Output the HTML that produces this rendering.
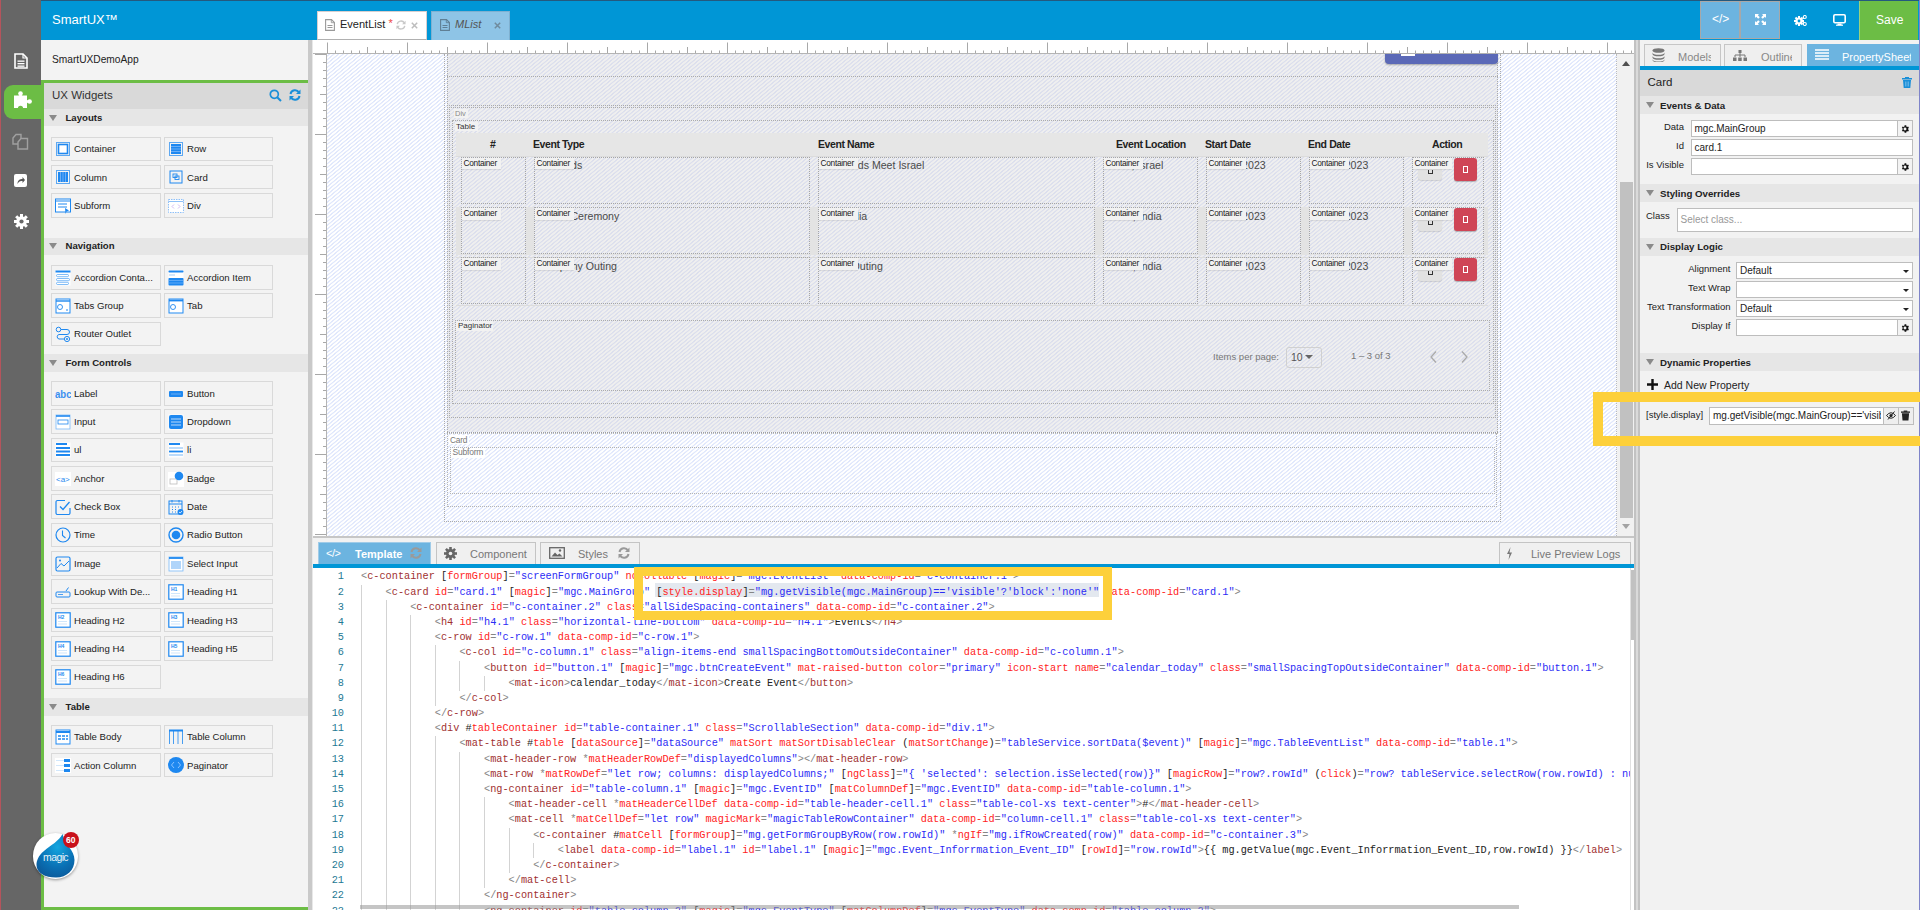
<!DOCTYPE html>
<html><head><meta charset="utf-8"><style>
*{box-sizing:border-box;margin:0;padding:0}
html,body{width:1920px;height:910px;overflow:hidden;background:#f2f2f2;font-family:"Liberation Sans",sans-serif;color:#222}
.a{position:absolute}
.t{white-space:nowrap;line-height:1}
.hatch{background-color:#f1f4fd;background-image:repeating-linear-gradient(-40deg,#ffffff 0px,#ffffff 1.2px,#e1e8fc 1.7px,#e1e8fc 2.5px,#ffffff 2.95px)}
.ghatch{background-color:#e7e9ee;background-image:repeating-linear-gradient(-40deg,#efefef 0px,#efefef 1.2px,#dcdfed 1.7px,#dcdfed 2.5px,#efefef 2.95px)}
.code{font-family:"Liberation Mono",monospace;font-size:10.25px;line-height:15.16px;white-space:pre}
.wi{background:#f3f3f3;border:1px solid #d9d9d9}
.wt{font-size:9.6px;color:#222}
.sh{background:#e6e6e6}
.st{font-size:9.6px;font-weight:bold;color:#222}
.tri{width:0;height:0;border-left:4.5px solid transparent;border-right:4.5px solid transparent;border-top:6px solid #8a8a8a}
.dot{border:1px dotted #9a9a9a}
.lbl{background:#f2f2f2;font-size:7.5px;color:#333;padding:1px 2px;line-height:1}
.tg{color:#a03030}.at{color:#f22}.sv{color:#2b2bf5}.dl{color:#858585}.pl{color:#222}
</style></head><body>
<div class="a " style="left:0px;top:0px;width:41px;height:910px;background:#666;border-left:1px solid #b5545c"></div>
<svg class="a" style="left:14px;top:53px" width="14" height="16" viewBox="0 0 14 16"><path d="M1 1H9L13 5V15H1Z" fill="none" stroke="#fff" stroke-width="1.6"/><path d="M9 1V5H13" fill="none" stroke="#fff" stroke-width="1.2"/><rect x="3.5" y="7.5" width="7" height="1.3" fill="#fff"/><rect x="3.5" y="10" width="7" height="1.3" fill="#fff"/><rect x="3.5" y="12.5" width="7" height="1.3" fill="#fff"/></svg>
<div class="a " style="left:4px;top:85px;width:40px;height:34px;background:#6cbd45;border-radius:9px 0 0 9px"></div>
<svg class="a" style="left:13px;top:91px" width="20" height="18" viewBox="0 0 20 18"><rect x="1" y="4.5" width="13" height="12.5" fill="#fff"/><rect x="6.2" y="2.5" width="2.6" height="3" fill="#fff"/><circle cx="7.5" cy="2.6" r="2.3" fill="#fff"/><rect x="13" y="9.2" width="3" height="2.6" fill="#fff"/><circle cx="16.6" cy="10.5" r="2.3" fill="#fff"/><circle cx="7.5" cy="17.3" r="2.6" fill="#6cbd45"/></svg>
<svg class="a" style="left:12px;top:133px" width="17" height="17" viewBox="0 0 17 17"><path d="M1 5L4 1.5H9V11H1Z" fill="none" stroke="#a0a0a0" stroke-width="1.4"/><path d="M6 9L9 5.5H15.5V16H6Z" fill="#666" stroke="#a0a0a0" stroke-width="1.4"/></svg>
<svg class="a" style="left:14px;top:174px" width="13" height="13" viewBox="0 0 13 13"><rect x="0" y="0" width="13" height="13" rx="2" fill="#fff"/><path d="M3.5 10C3.5 6 6 5 8.5 5V3L11 6L8.5 9V7C6.5 7 4.5 7.5 3.5 10Z" fill="#555"/></svg>
<svg class="a" style="left:13.5px;top:213.8px" width="15" height="15" viewBox="0 0 15 15"><rect x="6" y="0" width="3" height="15" fill="#fff" transform="rotate(0 7.5 7.5)"/><rect x="6" y="0" width="3" height="15" fill="#fff" transform="rotate(45 7.5 7.5)"/><rect x="6" y="0" width="3" height="15" fill="#fff" transform="rotate(90 7.5 7.5)"/><rect x="6" y="0" width="3" height="15" fill="#fff" transform="rotate(135 7.5 7.5)"/><circle cx="7.5" cy="7.5" r="5.3" fill="#fff"/><circle cx="7.5" cy="7.5" r="2.1" fill="#666"/></svg>
<div class="a " style="left:41px;top:0px;width:1879px;height:40px;background:#0096d6;border-top:1px solid #24597e"></div>
<div class="a t " style="left:52px;top:13px;font-size:13px;color:#fff">SmartUX&trade;</div>
<div class="a " style="left:317px;top:11px;width:110px;height:29px;background:#fff;border:1px solid #d8cfcf;border-bottom:1px solid #b0b0b0"></div>
<svg class="a" style="left:325px;top:19px" width="10" height="12" viewBox="0 0 10 12"><path d="M.6 .6H6.5L9.4 3.5V11.4H.6Z" fill="none" stroke="#999" stroke-width="1.1"/><path d="M6.3 .6V3.7H9.4" fill="none" stroke="#999" stroke-width=".9"/><path d="M2.5 6.5H7.5M2.5 8.5H7.5" stroke="#999" stroke-width="1"/></svg>
<div class="a t " style="left:340px;top:19px;font-size:11px;color:#222">EventList</div>
<div class="a t " style="left:388.5px;top:17.5px;font-size:11px;color:#e44">*</div>
<svg class="a" style="left:396px;top:20px" width="10" height="10" viewBox="0 0 12 12"><path d="M1.5 5A4.6 4.6 0 0 1 10 3.5" fill="none" stroke="#c8c8c8" stroke-width="1.6"/><path d="M11.5 .8V5H7.3Z" fill="#c8c8c8"/><path d="M10.5 7A4.6 4.6 0 0 1 2 8.5" fill="none" stroke="#c8c8c8" stroke-width="1.6"/><path d="M.5 11.2V7H4.7Z" fill="#c8c8c8"/></svg>
<svg class="a" style="left:410.5px;top:21.5px" width="7" height="7" viewBox="0 0 7 7"><path d="M.8 .8L6.2 6.2M6.2 .8L.8 6.2" stroke="#bdbdbd" stroke-width="1.5"/></svg>
<div class="a " style="left:431px;top:11px;width:79px;height:29px;background:#8ec4e6;border:1px solid #7fb0d0;border-bottom:none"></div>
<svg class="a" style="left:440px;top:19px" width="10" height="12" viewBox="0 0 10 12"><path d="M.6 .6H6.5L9.4 3.5V11.4H.6Z" fill="none" stroke="#5f7f95" stroke-width="1.1"/><path d="M6.3 .6V3.7H9.4" fill="none" stroke="#5f7f95" stroke-width=".9"/><path d="M2.5 6.5H7.5M2.5 8.5H7.5" stroke="#5f7f95" stroke-width="1"/></svg>
<div class="a t " style="left:455px;top:19px;font-size:11px;color:#555;font-style:italic">MList</div>
<svg class="a" style="left:494px;top:21.5px" width="7" height="7" viewBox="0 0 7 7"><path d="M.8 .8L6.2 6.2M6.2 .8L.8 6.2" stroke="#6f8a9c" stroke-width="1.5"/></svg>
<div class="a " style="left:1700px;top:1px;width:40px;height:38px;background:#6cb4e0;border:1px solid #a8a8a8"></div>
<div class="a t " style="left:1712px;top:13px;font-size:12px;color:#fff">&lt;/&gt;</div>
<div class="a " style="left:1740px;top:1px;width:40px;height:38px;background:#6cb4e0;border:1px solid #a8a8a8"></div>
<svg class="a" style="left:1755px;top:14px" width="11" height="11" viewBox="0 0 11 11"><path d="M0 0H4L2.8 1.2 4.8 3.2 3.2 4.8 1.2 2.8 0 4ZM11 0V4L9.8 2.8 7.8 4.8 6.2 3.2 8.2 1.2 7 0ZM0 11V7L1.2 8.2 3.2 6.2 4.8 7.8 2.8 9.8 4 11ZM11 11H7L8.2 9.8 6.2 7.8 7.8 6.2 9.8 8.2 11 7Z" fill="#fff"/></svg>
<svg class="a" style="left:1793.5px;top:14.5px" width="13" height="11" viewBox="0 0 13 11"><g transform="translate(0,1)"><rect x="4" y="0" width="2" height="10" fill="#fff" transform="rotate(0 5 5)"/><rect x="4" y="0" width="2" height="10" fill="#fff" transform="rotate(45 5 5)"/><rect x="4" y="0" width="2" height="10" fill="#fff" transform="rotate(90 5 5)"/><rect x="4" y="0" width="2" height="10" fill="#fff" transform="rotate(135 5 5)"/><circle cx="5" cy="5" r="3.6" fill="#fff"/><circle cx="5" cy="5" r="1.4" fill="#0096d6"/></g><circle cx="10.8" cy="2" r="1.5" fill="none" stroke="#fff" stroke-width="1.1"/><circle cx="10.8" cy="9" r="1.5" fill="none" stroke="#fff" stroke-width="1.1"/><path d="M8.5 4.5L9.8 3M8.5 6.5L9.8 8" stroke="#fff" stroke-width="1"/></svg>
<svg class="a" style="left:1833px;top:14px" width="13" height="12" viewBox="0 0 13 12"><rect x=".8" y=".8" width="11.4" height="8" rx="1.2" fill="none" stroke="#fff" stroke-width="1.6"/><rect x="4.5" y="9.5" width="4" height="1.5" fill="#fff"/><rect x="3" y="10.6" width="7" height="1.2" fill="#fff"/></svg>
<div class="a " style="left:1859px;top:1px;width:59px;height:39px;background:#6cbd45;border-left:1px solid #9ad27e"></div>
<div class="a t " style="left:1876px;top:14px;font-size:12px;color:#fff">Save</div>
<div class="a " style="left:41px;top:40px;width:267px;height:870px;background:#f3f3f3"></div>
<div class="a t " style="left:52px;top:55px;font-size:10.2px;color:#222">SmartUXDemoApp</div>
<div class="a " style="left:41px;top:80px;width:267px;height:3px;background:#6cbd45"></div>
<div class="a " style="left:41px;top:80px;width:3px;height:830px;background:#6cbd45"></div>
<div class="a " style="left:41px;top:907px;width:267px;height:3px;background:#6cbd45"></div>
<div class="a " style="left:44px;top:83px;width:264px;height:26px;background:#d9d9d9"></div>
<div class="a t " style="left:52px;top:90px;font-size:11.5px;color:#333">UX Widgets</div>
<svg class="a" style="left:269px;top:89px" width="13" height="13" viewBox="0 0 13 13"><circle cx="5.3" cy="5.3" r="4" fill="none" stroke="#1a8fd8" stroke-width="1.7"/><path d="M8.2 8.2L12 12" stroke="#1a8fd8" stroke-width="2"/></svg>
<svg class="a" style="left:289px;top:89px" width="12" height="12" viewBox="0 0 12 12"><path d="M1.5 5A4.6 4.6 0 0 1 10 3.5" fill="none" stroke="#1a8fd8" stroke-width="2"/><path d="M11.5 .5V5H7Z" fill="#1a8fd8"/><path d="M10.5 7A4.6 4.6 0 0 1 2 8.5" fill="none" stroke="#1a8fd8" stroke-width="2"/><path d="M.5 11.5V7H5Z" fill="#1a8fd8"/></svg>
<div class="a " style="left:308px;top:40px;width:5px;height:870px;background:#c9c9c9;border-right:1px solid #e8e8e8"></div>
<div class="a sh" style="left:44px;top:109px;width:264px;height:17px;"></div>
<div class="a tri" style="left:48.8px;top:114.8px"></div>
<div class="a t st" style="left:65.5px;top:112.6px;">Layouts</div>
<div class="a wi" style="left:51px;top:136.5px;width:110px;height:24.5px;"></div>
<svg class="a" style="left:54.5px;top:141.0px" width="16" height="16" viewBox="0 0 16 16"><rect x="1.5" y="1.5" width="13" height="13" fill="none" stroke="#1e88f0" stroke-width="1" opacity=".7"/><rect x="3.5" y="3.5" width="9" height="9" fill="#fff" stroke="#1e88f0" stroke-width="1.6"/></svg>
<div class="a t wt" style="left:74px;top:144.2px;">Container</div>
<div class="a wi" style="left:164px;top:136.5px;width:109px;height:24.5px;"></div>
<svg class="a" style="left:167.5px;top:141.0px" width="16" height="16" viewBox="0 0 16 16"><rect x="1.5" y="1.5" width="13" height="13" fill="none" stroke="#1e88f0" stroke-width="1" opacity=".7"/><rect x="3" y="3" width="10" height="10" fill="#1e88f0"/><path d="M3 5.5H13M3 8H13M3 10.5H13" stroke="#7fb8f8" stroke-width=".8"/></svg>
<div class="a t wt" style="left:187px;top:144.2px;">Row</div>
<div class="a wi" style="left:51px;top:164.85px;width:110px;height:24.5px;"></div>
<svg class="a" style="left:54.5px;top:169.35px" width="16" height="16" viewBox="0 0 16 16"><rect x="1.5" y="1.5" width="13" height="13" fill="none" stroke="#1e88f0" stroke-width="1" opacity=".7"/><rect x="3" y="3" width="10" height="10" fill="#1e88f0"/><path d="M5.5 3V13M8 3V13M10.5 3V13" stroke="#7fb8f8" stroke-width=".8"/></svg>
<div class="a t wt" style="left:74px;top:172.54999999999998px;">Column</div>
<div class="a wi" style="left:164px;top:164.85px;width:109px;height:24.5px;"></div>
<svg class="a" style="left:167.5px;top:169.35px" width="16" height="16" viewBox="0 0 16 16"><rect x="2" y="2" width="12" height="12" fill="none" stroke="#1e88f0" stroke-width="1"/><rect x="5" y="5" width="4" height="3.5" fill="none" stroke="#1e88f0" stroke-width=".9"/><rect x="7" y="7" width="4" height="3.5" fill="none" stroke="#1e88f0" stroke-width=".9"/></svg>
<div class="a t wt" style="left:187px;top:172.54999999999998px;">Card</div>
<div class="a wi" style="left:51px;top:193.2px;width:110px;height:24.5px;"></div>
<svg class="a" style="left:54.5px;top:197.7px" width="16" height="16" viewBox="0 0 16 16"><rect x=".5" y="1" width="15" height="13" fill="#fff" stroke="#1e88f0" stroke-width="1"/><path d="M.5 3H15.5M3 6H12M3 9H12" stroke="#1e88f0" stroke-width="1"/><path d="M10 10L14 12.5L11.5 13.5L10.5 16Z" fill="#1e88f0"/></svg>
<div class="a t wt" style="left:74px;top:200.89999999999998px;">Subform</div>
<div class="a wi" style="left:164px;top:193.2px;width:109px;height:24.5px;"></div>
<svg class="a" style="left:167.5px;top:197.7px" width="16" height="16" viewBox="0 0 16 16"><rect x=".5" y="1.5" width="15" height="13" fill="#fff" stroke="#8ec0f8" stroke-width="1" stroke-dasharray="1.5 1"/><path d="M.5 3.5H15.5" stroke="#8ec0f8"/><path d="M6 6.5L4 8.5L6 10.5M10 6.5L12 8.5L10 10.5" fill="none" stroke="#c8a8f0" stroke-width=".8"/></svg>
<div class="a t wt" style="left:187px;top:200.89999999999998px;">Div</div>
<div class="a sh" style="left:44px;top:237.5px;width:264px;height:17.5px;"></div>
<div class="a tri" style="left:48.8px;top:243.3px"></div>
<div class="a t st" style="left:65.5px;top:241.1px;">Navigation</div>
<div class="a wi" style="left:51px;top:265.0px;width:110px;height:24.5px;"></div>
<svg class="a" style="left:54.5px;top:269.5px" width="16" height="16" viewBox="0 0 16 16"><rect x=".5" y=".5" width="15" height="15" fill="#fff" stroke="none"/><path d="M.5 1.5H15.5" stroke="#1e88f0" stroke-width="2"/><rect x="1.5" y="4.5" width="12" height="2.2" rx="1" fill="none" stroke="#1e88f0" stroke-width=".8" opacity=".7"/><rect x="1.5" y="8.5" width="13" height="2.2" rx="1" fill="none" stroke="#1e88f0" stroke-width=".8" opacity=".7"/><rect x="1.5" y="12.3" width="12" height="2.2" rx="1" fill="none" stroke="#1e88f0" stroke-width=".8" opacity=".7"/></svg>
<div class="a t wt" style="left:74px;top:272.7px;">Accordion Conta...</div>
<div class="a wi" style="left:164px;top:265.0px;width:109px;height:24.5px;"></div>
<svg class="a" style="left:167.5px;top:269.5px" width="16" height="16" viewBox="0 0 16 16"><rect x=".5" y=".5" width="15" height="15" fill="#fff" stroke="none"/><rect x=".5" y=".5" width="15" height="2" rx=".8" fill="#1e88f0"/><rect x="1" y="4" width="6" height="2" fill="#1e88f0" opacity=".2"/><rect x=".5" y="8" width="15" height="7.5" rx=".8" fill="#1e88f0"/><path d="M1 10.5H15M1 13H15" stroke="#9ccaff" stroke-width=".5"/></svg>
<div class="a t wt" style="left:187px;top:272.7px;">Accordion Item</div>
<div class="a wi" style="left:51px;top:293.35px;width:110px;height:24.5px;"></div>
<svg class="a" style="left:54.5px;top:297.85px" width="16" height="16" viewBox="0 0 16 16"><rect x=".5" y=".5" width="15" height="15" fill="#fff" stroke="none"/><rect x="1" y="1" width="14" height="14" fill="none" stroke="#1e88f0" stroke-width="1"/><path d="M1 3H15" stroke="#1e88f0" stroke-width="1.4"/><circle cx="5" cy="9" r="2.5" fill="none" stroke="#1e88f0" stroke-width=".9"/><path d="M11 12H13" stroke="#1e88f0"/></svg>
<div class="a t wt" style="left:74px;top:301.05px;">Tabs Group</div>
<div class="a wi" style="left:164px;top:293.35px;width:109px;height:24.5px;"></div>
<svg class="a" style="left:167.5px;top:297.85px" width="16" height="16" viewBox="0 0 16 16"><rect x=".5" y=".5" width="15" height="15" fill="#fff" stroke="none"/><rect x="1" y="1" width="14" height="14" fill="none" stroke="#1e88f0" stroke-width="1"/><path d="M1 2.5H15" stroke="#1e88f0" stroke-width="1.8"/><circle cx="5" cy="9" r="2.5" fill="none" stroke="#1e88f0" stroke-width=".9"/></svg>
<div class="a t wt" style="left:187px;top:301.05px;">Tab</div>
<div class="a wi" style="left:51px;top:321.7px;width:110px;height:24.5px;"></div>
<svg class="a" style="left:54.5px;top:326.2px" width="16" height="16" viewBox="0 0 16 16"><circle cx="3.5" cy="3.5" r="2.3" fill="none" stroke="#1e88f0" stroke-width="1"/><circle cx="12" cy="13" r="2.6" fill="none" stroke="#1e88f0" stroke-width="1"/><circle cx="12" cy="13" r="1" fill="#1e88f0"/><path d="M6 3.5H12A2.5 2.5 0 0 1 12 8.5H4A2.3 2.3 0 0 0 4 13H9" fill="none" stroke="#1e88f0" stroke-width="1"/></svg>
<div class="a t wt" style="left:74px;top:329.4px;">Router Outlet</div>
<div class="a sh" style="left:44px;top:354px;width:264px;height:18px;"></div>
<div class="a tri" style="left:48.8px;top:359.8px"></div>
<div class="a t st" style="left:65.5px;top:357.6px;">Form Controls</div>
<div class="a wi" style="left:51px;top:381.0px;width:110px;height:24.5px;"></div>
<svg class="a" style="left:54.5px;top:385.5px" width="16" height="16" viewBox="0 0 16 16"><text x="0" y="12.3" font-family="Liberation Sans" font-weight="bold" font-size="10" textLength="16.5" lengthAdjust="spacingAndGlyphs" fill="#3a8ff0">abc</text></svg>
<div class="a t wt" style="left:74px;top:388.7px;">Label</div>
<div class="a wi" style="left:164px;top:381.0px;width:109px;height:24.5px;"></div>
<svg class="a" style="left:167.5px;top:385.5px" width="16" height="16" viewBox="0 0 16 16"><rect x="1" y="5" width="14" height="6" rx="1" fill="#1e88f0"/><path d="M3 8H13" stroke="#9cc8f8" stroke-width=".6"/></svg>
<div class="a t wt" style="left:187px;top:388.7px;">Button</div>
<div class="a wi" style="left:51px;top:409.35px;width:110px;height:24.5px;"></div>
<svg class="a" style="left:54.5px;top:413.85px" width="16" height="16" viewBox="0 0 16 16"><rect x=".5" y=".5" width="15" height="15" fill="#fff" stroke="none"/><rect x="1" y="1" width="14" height="14" fill="none" stroke="#1e88f0" stroke-width=".8" opacity=".6"/><path d="M1 2H15" stroke="#1e88f0" stroke-width="1.6"/><rect x="3" y="6" width="10" height="4" fill="none" stroke="#1e88f0" stroke-width=".8"/></svg>
<div class="a t wt" style="left:74px;top:417.05px;">Input</div>
<div class="a wi" style="left:164px;top:409.35px;width:109px;height:24.5px;"></div>
<svg class="a" style="left:167.5px;top:413.85px" width="16" height="16" viewBox="0 0 16 16"><rect x=".5" y=".5" width="15" height="15" fill="#fff" stroke="none"/><rect x="1" y="1" width="14" height="14" rx="2" fill="#1e88f0"/><path d="M3 5H13M3 8H13M3 11H13" stroke="#fff" stroke-width=".7"/></svg>
<div class="a t wt" style="left:187px;top:417.05px;">Dropdown</div>
<div class="a wi" style="left:51px;top:437.7px;width:110px;height:24.5px;"></div>
<svg class="a" style="left:54.5px;top:442.2px" width="16" height="16" viewBox="0 0 16 16"><rect x=".5" y=".5" width="15" height="15" fill="#fff" stroke="none"/><rect x="1" y="1" width="11" height="2" fill="#1e88f0"/><path d="M1 6H15M1 9.5H15M1 13H15" stroke="#1e88f0" stroke-width="1.8"/></svg>
<div class="a t wt" style="left:74px;top:445.4px;">ul</div>
<div class="a wi" style="left:164px;top:437.7px;width:109px;height:24.5px;"></div>
<svg class="a" style="left:167.5px;top:442.2px" width="16" height="16" viewBox="0 0 16 16"><rect x=".5" y=".5" width="15" height="15" fill="#fff" stroke="none"/><rect x="1" y="1" width="11" height="2" fill="#1e88f0"/><path d="M1 6H15M1 13H15" stroke="#1e88f0" stroke-width="1" opacity=".6"/><path d="M1 9.5H15" stroke="#1e88f0" stroke-width="1.8"/></svg>
<div class="a t wt" style="left:187px;top:445.4px;">li</div>
<div class="a wi" style="left:51px;top:466.05px;width:110px;height:24.5px;"></div>
<svg class="a" style="left:54.5px;top:470.55px" width="16" height="16" viewBox="0 0 16 16"><rect x="0" y="1" width="16" height="14" fill="#fff"/><text x="1" y="11" font-family="Liberation Sans" font-size="8" fill="#1e88f0">&lt;a&gt;</text></svg>
<div class="a t wt" style="left:74px;top:473.75px;">Anchor</div>
<div class="a wi" style="left:164px;top:466.05px;width:109px;height:24.5px;"></div>
<svg class="a" style="left:167.5px;top:470.55px" width="16" height="16" viewBox="0 0 16 16"><rect x="0" y="1" width="16" height="15" fill="#fff"/><rect x="2" y="8" width="7" height="5" fill="none" stroke="#bbb" stroke-width=".8"/><circle cx="11" cy="5" r="4.3" fill="#1e88f0"/></svg>
<div class="a t wt" style="left:187px;top:473.75px;">Badge</div>
<div class="a wi" style="left:51px;top:494.4px;width:110px;height:24.5px;"></div>
<svg class="a" style="left:54.5px;top:498.9px" width="16" height="16" viewBox="0 0 16 16"><path d="M10 1.5H2.5A1.5 1.5 0 0 0 1 3V14A1.5 1.5 0 0 0 2.5 15.5H13.5A1.5 1.5 0 0 0 15 14V9" fill="none" stroke="#1e88f0" stroke-width="1.2"/><path d="M5 7.5L8 10.5L14.5 3" fill="none" stroke="#1e88f0" stroke-width="1.3"/></svg>
<div class="a t wt" style="left:74px;top:502.09999999999997px;">Check Box</div>
<div class="a wi" style="left:164px;top:494.4px;width:109px;height:24.5px;"></div>
<svg class="a" style="left:167.5px;top:498.9px" width="16" height="16" viewBox="0 0 16 16"><rect x="1" y="2" width="13" height="13" fill="none" stroke="#1e88f0" stroke-width="1"/><path d="M4 1V3.5M11 1V3.5M1 5H14M4 8H5M7 8H8M10 8H11M4 10.5H5M7 10.5H8M4 13H5M7 13H8" stroke="#1e88f0" stroke-width="1"/><circle cx="12.5" cy="13" r="3" fill="#1e88f0"/><path d="M11 13L12.2 14L14 12" fill="none" stroke="#fff" stroke-width=".8"/></svg>
<div class="a t wt" style="left:187px;top:502.09999999999997px;">Date</div>
<div class="a wi" style="left:51px;top:522.75px;width:110px;height:24.5px;"></div>
<svg class="a" style="left:54.5px;top:527.25px" width="16" height="16" viewBox="0 0 16 16"><circle cx="8" cy="8" r="7" fill="none" stroke="#1e88f0" stroke-width="1.2"/><path d="M7.5 3.5V8.5L10.5 11" fill="none" stroke="#1e88f0" stroke-width="1.1"/></svg>
<div class="a t wt" style="left:74px;top:530.45px;">Time</div>
<div class="a wi" style="left:164px;top:522.75px;width:109px;height:24.5px;"></div>
<svg class="a" style="left:167.5px;top:527.25px" width="16" height="16" viewBox="0 0 16 16"><circle cx="8" cy="8" r="7" fill="none" stroke="#1e88f0" stroke-width="1.4"/><circle cx="8" cy="8" r="4.3" fill="#1e88f0"/></svg>
<div class="a t wt" style="left:187px;top:530.45px;">Radio Button</div>
<div class="a wi" style="left:51px;top:551.1px;width:110px;height:24.5px;"></div>
<svg class="a" style="left:54.5px;top:555.6px" width="16" height="16" viewBox="0 0 16 16"><rect x="1" y="1" width="14" height="14" rx="1.5" fill="none" stroke="#1e88f0" stroke-width="1.2"/><path d="M2 12L6 7.5L9 10L14 5" fill="none" stroke="#1e88f0" stroke-width="1"/><circle cx="5" cy="4.5" r="1" fill="#1e88f0"/></svg>
<div class="a t wt" style="left:74px;top:558.8000000000001px;">Image</div>
<div class="a wi" style="left:164px;top:551.1px;width:109px;height:24.5px;"></div>
<svg class="a" style="left:167.5px;top:555.6px" width="16" height="16" viewBox="0 0 16 16"><rect x=".5" y=".5" width="15" height="15" fill="#fff" stroke="none"/><rect x="1" y="1" width="14" height="14" fill="none" stroke="#1e88f0" stroke-width=".8" opacity=".6"/><path d="M1 2H15" stroke="#1e88f0" stroke-width="1.8"/><rect x="3" y="5" width="10" height="8" fill="#1e88f0" opacity=".35"/></svg>
<div class="a t wt" style="left:187px;top:558.8000000000001px;">Select Input</div>
<div class="a wi" style="left:51px;top:579.45px;width:110px;height:24.5px;"></div>
<svg class="a" style="left:54.5px;top:583.95px" width="16" height="16" viewBox="0 0 16 16"><rect x="1" y="8" width="14" height="5" rx="1" fill="none" stroke="#1e88f0" stroke-width="1"/><path d="M3 10.5H8" stroke="#1e88f0" stroke-width=".8"/><path d="M11 7L13.5 3.5" stroke="#1e88f0" stroke-width="1"/></svg>
<div class="a t wt" style="left:74px;top:587.1500000000001px;">Lookup With De...</div>
<div class="a wi" style="left:164px;top:579.45px;width:109px;height:24.5px;"></div>
<svg class="a" style="left:167.5px;top:583.95px" width="16" height="16" viewBox="0 0 16 16"><rect x=".8" y=".8" width="14.4" height="14.4" fill="#fff" stroke="#1e88f0" stroke-width="1.2"/><text x="3" y="7" font-family="Liberation Sans" font-size="5" font-weight="bold" fill="#1e88f0">H1</text><path d="M3 9.5H12M3 12H12" stroke="#1e88f0" stroke-width=".6" opacity=".35"/></svg>
<div class="a t wt" style="left:187px;top:587.1500000000001px;">Heading H1</div>
<div class="a wi" style="left:51px;top:607.8px;width:110px;height:24.5px;"></div>
<svg class="a" style="left:54.5px;top:612.3px" width="16" height="16" viewBox="0 0 16 16"><rect x=".8" y=".8" width="14.4" height="14.4" fill="#fff" stroke="#1e88f0" stroke-width="1.2"/><text x="3" y="7" font-family="Liberation Sans" font-size="5" font-weight="bold" fill="#1e88f0">H2</text><path d="M3 9.5H12M3 12H12" stroke="#1e88f0" stroke-width=".6" opacity=".35"/></svg>
<div class="a t wt" style="left:74px;top:615.5px;">Heading H2</div>
<div class="a wi" style="left:164px;top:607.8px;width:109px;height:24.5px;"></div>
<svg class="a" style="left:167.5px;top:612.3px" width="16" height="16" viewBox="0 0 16 16"><rect x=".8" y=".8" width="14.4" height="14.4" fill="#fff" stroke="#1e88f0" stroke-width="1.2"/><text x="3" y="7" font-family="Liberation Sans" font-size="5" font-weight="bold" fill="#1e88f0">H3</text><path d="M3 9.5H12M3 12H12" stroke="#1e88f0" stroke-width=".6" opacity=".35"/></svg>
<div class="a t wt" style="left:187px;top:615.5px;">Heading H3</div>
<div class="a wi" style="left:51px;top:636.15px;width:110px;height:24.5px;"></div>
<svg class="a" style="left:54.5px;top:640.65px" width="16" height="16" viewBox="0 0 16 16"><rect x=".8" y=".8" width="14.4" height="14.4" fill="#fff" stroke="#1e88f0" stroke-width="1.2"/><text x="3" y="7" font-family="Liberation Sans" font-size="5" font-weight="bold" fill="#1e88f0">H4</text><path d="M3 9.5H12M3 12H12" stroke="#1e88f0" stroke-width=".6" opacity=".35"/></svg>
<div class="a t wt" style="left:74px;top:643.85px;">Heading H4</div>
<div class="a wi" style="left:164px;top:636.15px;width:109px;height:24.5px;"></div>
<svg class="a" style="left:167.5px;top:640.65px" width="16" height="16" viewBox="0 0 16 16"><rect x=".8" y=".8" width="14.4" height="14.4" fill="#fff" stroke="#1e88f0" stroke-width="1.2"/><text x="3" y="7" font-family="Liberation Sans" font-size="5" font-weight="bold" fill="#1e88f0">H5</text><path d="M3 9.5H12M3 12H12" stroke="#1e88f0" stroke-width=".6" opacity=".35"/></svg>
<div class="a t wt" style="left:187px;top:643.85px;">Heading H5</div>
<div class="a wi" style="left:51px;top:664.5px;width:110px;height:24.5px;"></div>
<svg class="a" style="left:54.5px;top:669.0px" width="16" height="16" viewBox="0 0 16 16"><rect x=".8" y=".8" width="14.4" height="14.4" fill="#fff" stroke="#1e88f0" stroke-width="1.2"/><text x="3" y="7" font-family="Liberation Sans" font-size="5" font-weight="bold" fill="#1e88f0">H6</text><path d="M3 9.5H12M3 12H12" stroke="#1e88f0" stroke-width=".6" opacity=".35"/></svg>
<div class="a t wt" style="left:74px;top:672.2px;">Heading H6</div>
<div class="a sh" style="left:44px;top:698px;width:264px;height:17.5px;"></div>
<div class="a tri" style="left:48.8px;top:703.8px"></div>
<div class="a t st" style="left:65.5px;top:701.6px;">Table</div>
<div class="a wi" style="left:51px;top:724.5px;width:110px;height:24.5px;"></div>
<svg class="a" style="left:54.5px;top:729.0px" width="16" height="16" viewBox="0 0 16 16"><rect x=".5" y=".5" width="15" height="15" fill="#fff" stroke="none"/><rect x="1" y="1" width="14" height="14" fill="none" stroke="#1e88f0" stroke-width="1"/><path d="M1 3H15" stroke="#1e88f0" stroke-width="2"/><path d="M3 7H13M3 10H13" stroke="#1e88f0" stroke-width="1.4" stroke-dasharray="3 1"/></svg>
<div class="a t wt" style="left:74px;top:732.2px;">Table Body</div>
<div class="a wi" style="left:164px;top:724.5px;width:109px;height:24.5px;"></div>
<svg class="a" style="left:167.5px;top:729.0px" width="16" height="16" viewBox="0 0 16 16"><path d="M1 1.5H15" stroke="#1e88f0" stroke-width="2"/><path d="M1.5 2V15M5.5 2V15M10 2V15M14.5 2V15" stroke="#1e88f0" stroke-width="1" opacity=".8"/></svg>
<div class="a t wt" style="left:187px;top:732.2px;">Table Column</div>
<div class="a wi" style="left:51px;top:752.85px;width:110px;height:24.5px;"></div>
<svg class="a" style="left:54.5px;top:757.35px" width="16" height="16" viewBox="0 0 16 16"><rect x="0" y="1" width="16" height="15" fill="#fff"/><rect x="9" y="2" width="6" height="3" fill="#1e88f0"/><rect x="9" y="7" width="6" height="3" fill="#1e88f0"/><rect x="9" y="12" width="6" height="3" fill="#1e88f0"/><path d="M1 3.5H9M1 8.5H9M1 13.5H9" stroke="#1e88f0" stroke-width=".5" opacity=".4"/></svg>
<div class="a t wt" style="left:74px;top:760.5500000000001px;">Action Column</div>
<div class="a wi" style="left:164px;top:752.85px;width:109px;height:24.5px;"></div>
<svg class="a" style="left:167.5px;top:757.35px" width="16" height="16" viewBox="0 0 16 16"><circle cx="8" cy="8" r="8" fill="#1e88f0"/><path d="M6 5L3.5 8L6 11M10 5L12.5 8L10 11" fill="none" stroke="#8cc4ff" stroke-width="1"/></svg>
<div class="a t wt" style="left:187px;top:760.5500000000001px;">Paginator</div>
<div class="a" style="left:32.6px;top:833.2px;width:45.5px;height:45.5px;border-radius:50%;background:#fff;box-shadow:0 1px 3px rgba(0,0,0,.4)"></div>
<svg class="a" style="left:32.6px;top:833.2px" width="46" height="46" viewBox="0 0 46 46"><defs><radialGradient id="mg" cx="0.55" cy="0.3" r="0.8"><stop offset="0" stop-color="#13a6e0"/><stop offset="0.6" stop-color="#0a6fb3"/><stop offset="1" stop-color="#0b5595"/></radialGradient></defs><path d="M29.5 1C26 8 18 12 11 18C5 23 3.5 28 3.5 32C3.5 40 12 44.5 23 44.5C34 44.5 41.5 37 41.5 27C41.5 17 32 12 29.5 1Z" fill="url(#mg)"/><text x="10" y="27.5" font-family="Liberation Sans" font-size="10.5" letter-spacing="-0.6" fill="#fff" fill-opacity=".92">magic</text></svg>
<div class="a" style="left:62.8px;top:832.3px;width:16px;height:16px;border-radius:50%;background:#c8101a;color:#fff;font-size:8.5px;font-weight:bold;text-align:center;line-height:16px">60</div>
<div class="a " style="left:313px;top:40px;width:1322px;height:498px;background:#fff"></div>
<svg class="a" style="left:313px;top:40px" width="1322" height="14"><rect x="14" y="2.5" width="1" height="11.5" fill="#a8a8a8"/><rect x="22" y="10.5" width="1" height="3.5" fill="#a8a8a8"/><rect x="30" y="10.5" width="1" height="3.5" fill="#a8a8a8"/><rect x="38" y="10.5" width="1" height="3.5" fill="#a8a8a8"/><rect x="46" y="10.5" width="1" height="3.5" fill="#a8a8a8"/><rect x="54" y="7" width="1" height="7" fill="#a8a8a8"/><rect x="62" y="10.5" width="1" height="3.5" fill="#a8a8a8"/><rect x="70" y="10.5" width="1" height="3.5" fill="#a8a8a8"/><rect x="78" y="10.5" width="1" height="3.5" fill="#a8a8a8"/><rect x="86" y="10.5" width="1" height="3.5" fill="#a8a8a8"/><rect x="94" y="2.5" width="1" height="11.5" fill="#a8a8a8"/><rect x="102" y="10.5" width="1" height="3.5" fill="#a8a8a8"/><rect x="110" y="10.5" width="1" height="3.5" fill="#a8a8a8"/><rect x="118" y="10.5" width="1" height="3.5" fill="#a8a8a8"/><rect x="126" y="10.5" width="1" height="3.5" fill="#a8a8a8"/><rect x="134" y="7" width="1" height="7" fill="#a8a8a8"/><rect x="142" y="10.5" width="1" height="3.5" fill="#a8a8a8"/><rect x="150" y="10.5" width="1" height="3.5" fill="#a8a8a8"/><rect x="158" y="10.5" width="1" height="3.5" fill="#a8a8a8"/><rect x="166" y="10.5" width="1" height="3.5" fill="#a8a8a8"/><rect x="174" y="2.5" width="1" height="11.5" fill="#a8a8a8"/><rect x="182" y="10.5" width="1" height="3.5" fill="#a8a8a8"/><rect x="190" y="10.5" width="1" height="3.5" fill="#a8a8a8"/><rect x="198" y="10.5" width="1" height="3.5" fill="#a8a8a8"/><rect x="206" y="10.5" width="1" height="3.5" fill="#a8a8a8"/><rect x="214" y="7" width="1" height="7" fill="#a8a8a8"/><rect x="222" y="10.5" width="1" height="3.5" fill="#a8a8a8"/><rect x="230" y="10.5" width="1" height="3.5" fill="#a8a8a8"/><rect x="238" y="10.5" width="1" height="3.5" fill="#a8a8a8"/><rect x="246" y="10.5" width="1" height="3.5" fill="#a8a8a8"/><rect x="254" y="2.5" width="1" height="11.5" fill="#a8a8a8"/><rect x="262" y="10.5" width="1" height="3.5" fill="#a8a8a8"/><rect x="270" y="10.5" width="1" height="3.5" fill="#a8a8a8"/><rect x="278" y="10.5" width="1" height="3.5" fill="#a8a8a8"/><rect x="286" y="10.5" width="1" height="3.5" fill="#a8a8a8"/><rect x="294" y="7" width="1" height="7" fill="#a8a8a8"/><rect x="302" y="10.5" width="1" height="3.5" fill="#a8a8a8"/><rect x="310" y="10.5" width="1" height="3.5" fill="#a8a8a8"/><rect x="318" y="10.5" width="1" height="3.5" fill="#a8a8a8"/><rect x="326" y="10.5" width="1" height="3.5" fill="#a8a8a8"/><rect x="334" y="2.5" width="1" height="11.5" fill="#a8a8a8"/><rect x="342" y="10.5" width="1" height="3.5" fill="#a8a8a8"/><rect x="350" y="10.5" width="1" height="3.5" fill="#a8a8a8"/><rect x="358" y="10.5" width="1" height="3.5" fill="#a8a8a8"/><rect x="366" y="10.5" width="1" height="3.5" fill="#a8a8a8"/><rect x="374" y="7" width="1" height="7" fill="#a8a8a8"/><rect x="382" y="10.5" width="1" height="3.5" fill="#a8a8a8"/><rect x="390" y="10.5" width="1" height="3.5" fill="#a8a8a8"/><rect x="398" y="10.5" width="1" height="3.5" fill="#a8a8a8"/><rect x="406" y="10.5" width="1" height="3.5" fill="#a8a8a8"/><rect x="414" y="2.5" width="1" height="11.5" fill="#a8a8a8"/><rect x="422" y="10.5" width="1" height="3.5" fill="#a8a8a8"/><rect x="430" y="10.5" width="1" height="3.5" fill="#a8a8a8"/><rect x="438" y="10.5" width="1" height="3.5" fill="#a8a8a8"/><rect x="446" y="10.5" width="1" height="3.5" fill="#a8a8a8"/><rect x="454" y="7" width="1" height="7" fill="#a8a8a8"/><rect x="462" y="10.5" width="1" height="3.5" fill="#a8a8a8"/><rect x="470" y="10.5" width="1" height="3.5" fill="#a8a8a8"/><rect x="478" y="10.5" width="1" height="3.5" fill="#a8a8a8"/><rect x="486" y="10.5" width="1" height="3.5" fill="#a8a8a8"/><rect x="494" y="2.5" width="1" height="11.5" fill="#a8a8a8"/><rect x="502" y="10.5" width="1" height="3.5" fill="#a8a8a8"/><rect x="510" y="10.5" width="1" height="3.5" fill="#a8a8a8"/><rect x="518" y="10.5" width="1" height="3.5" fill="#a8a8a8"/><rect x="526" y="10.5" width="1" height="3.5" fill="#a8a8a8"/><rect x="534" y="7" width="1" height="7" fill="#a8a8a8"/><rect x="542" y="10.5" width="1" height="3.5" fill="#a8a8a8"/><rect x="550" y="10.5" width="1" height="3.5" fill="#a8a8a8"/><rect x="558" y="10.5" width="1" height="3.5" fill="#a8a8a8"/><rect x="566" y="10.5" width="1" height="3.5" fill="#a8a8a8"/><rect x="574" y="2.5" width="1" height="11.5" fill="#a8a8a8"/><rect x="582" y="10.5" width="1" height="3.5" fill="#a8a8a8"/><rect x="590" y="10.5" width="1" height="3.5" fill="#a8a8a8"/><rect x="598" y="10.5" width="1" height="3.5" fill="#a8a8a8"/><rect x="606" y="10.5" width="1" height="3.5" fill="#a8a8a8"/><rect x="614" y="7" width="1" height="7" fill="#a8a8a8"/><rect x="622" y="10.5" width="1" height="3.5" fill="#a8a8a8"/><rect x="630" y="10.5" width="1" height="3.5" fill="#a8a8a8"/><rect x="638" y="10.5" width="1" height="3.5" fill="#a8a8a8"/><rect x="646" y="10.5" width="1" height="3.5" fill="#a8a8a8"/><rect x="654" y="2.5" width="1" height="11.5" fill="#a8a8a8"/><rect x="662" y="10.5" width="1" height="3.5" fill="#a8a8a8"/><rect x="670" y="10.5" width="1" height="3.5" fill="#a8a8a8"/><rect x="678" y="10.5" width="1" height="3.5" fill="#a8a8a8"/><rect x="686" y="10.5" width="1" height="3.5" fill="#a8a8a8"/><rect x="694" y="7" width="1" height="7" fill="#a8a8a8"/><rect x="702" y="10.5" width="1" height="3.5" fill="#a8a8a8"/><rect x="710" y="10.5" width="1" height="3.5" fill="#a8a8a8"/><rect x="718" y="10.5" width="1" height="3.5" fill="#a8a8a8"/><rect x="726" y="10.5" width="1" height="3.5" fill="#a8a8a8"/><rect x="734" y="2.5" width="1" height="11.5" fill="#a8a8a8"/><rect x="742" y="10.5" width="1" height="3.5" fill="#a8a8a8"/><rect x="750" y="10.5" width="1" height="3.5" fill="#a8a8a8"/><rect x="758" y="10.5" width="1" height="3.5" fill="#a8a8a8"/><rect x="766" y="10.5" width="1" height="3.5" fill="#a8a8a8"/><rect x="774" y="7" width="1" height="7" fill="#a8a8a8"/><rect x="782" y="10.5" width="1" height="3.5" fill="#a8a8a8"/><rect x="790" y="10.5" width="1" height="3.5" fill="#a8a8a8"/><rect x="798" y="10.5" width="1" height="3.5" fill="#a8a8a8"/><rect x="806" y="10.5" width="1" height="3.5" fill="#a8a8a8"/><rect x="814" y="2.5" width="1" height="11.5" fill="#a8a8a8"/><rect x="822" y="10.5" width="1" height="3.5" fill="#a8a8a8"/><rect x="830" y="10.5" width="1" height="3.5" fill="#a8a8a8"/><rect x="838" y="10.5" width="1" height="3.5" fill="#a8a8a8"/><rect x="846" y="10.5" width="1" height="3.5" fill="#a8a8a8"/><rect x="854" y="7" width="1" height="7" fill="#a8a8a8"/><rect x="862" y="10.5" width="1" height="3.5" fill="#a8a8a8"/><rect x="870" y="10.5" width="1" height="3.5" fill="#a8a8a8"/><rect x="878" y="10.5" width="1" height="3.5" fill="#a8a8a8"/><rect x="886" y="10.5" width="1" height="3.5" fill="#a8a8a8"/><rect x="894" y="2.5" width="1" height="11.5" fill="#a8a8a8"/><rect x="902" y="10.5" width="1" height="3.5" fill="#a8a8a8"/><rect x="910" y="10.5" width="1" height="3.5" fill="#a8a8a8"/><rect x="918" y="10.5" width="1" height="3.5" fill="#a8a8a8"/><rect x="926" y="10.5" width="1" height="3.5" fill="#a8a8a8"/><rect x="934" y="7" width="1" height="7" fill="#a8a8a8"/><rect x="942" y="10.5" width="1" height="3.5" fill="#a8a8a8"/><rect x="950" y="10.5" width="1" height="3.5" fill="#a8a8a8"/><rect x="958" y="10.5" width="1" height="3.5" fill="#a8a8a8"/><rect x="966" y="10.5" width="1" height="3.5" fill="#a8a8a8"/><rect x="974" y="2.5" width="1" height="11.5" fill="#a8a8a8"/><rect x="982" y="10.5" width="1" height="3.5" fill="#a8a8a8"/><rect x="990" y="10.5" width="1" height="3.5" fill="#a8a8a8"/><rect x="998" y="10.5" width="1" height="3.5" fill="#a8a8a8"/><rect x="1006" y="10.5" width="1" height="3.5" fill="#a8a8a8"/><rect x="1014" y="7" width="1" height="7" fill="#a8a8a8"/><rect x="1022" y="10.5" width="1" height="3.5" fill="#a8a8a8"/><rect x="1030" y="10.5" width="1" height="3.5" fill="#a8a8a8"/><rect x="1038" y="10.5" width="1" height="3.5" fill="#a8a8a8"/><rect x="1046" y="10.5" width="1" height="3.5" fill="#a8a8a8"/><rect x="1054" y="2.5" width="1" height="11.5" fill="#a8a8a8"/><rect x="1062" y="10.5" width="1" height="3.5" fill="#a8a8a8"/><rect x="1070" y="10.5" width="1" height="3.5" fill="#a8a8a8"/><rect x="1078" y="10.5" width="1" height="3.5" fill="#a8a8a8"/><rect x="1086" y="10.5" width="1" height="3.5" fill="#a8a8a8"/><rect x="1094" y="7" width="1" height="7" fill="#a8a8a8"/><rect x="1102" y="10.5" width="1" height="3.5" fill="#a8a8a8"/><rect x="1110" y="10.5" width="1" height="3.5" fill="#a8a8a8"/><rect x="1118" y="10.5" width="1" height="3.5" fill="#a8a8a8"/><rect x="1126" y="10.5" width="1" height="3.5" fill="#a8a8a8"/><rect x="1134" y="2.5" width="1" height="11.5" fill="#a8a8a8"/><rect x="1142" y="10.5" width="1" height="3.5" fill="#a8a8a8"/><rect x="1150" y="10.5" width="1" height="3.5" fill="#a8a8a8"/><rect x="1158" y="10.5" width="1" height="3.5" fill="#a8a8a8"/><rect x="1166" y="10.5" width="1" height="3.5" fill="#a8a8a8"/><rect x="1174" y="7" width="1" height="7" fill="#a8a8a8"/><rect x="1182" y="10.5" width="1" height="3.5" fill="#a8a8a8"/><rect x="1190" y="10.5" width="1" height="3.5" fill="#a8a8a8"/><rect x="1198" y="10.5" width="1" height="3.5" fill="#a8a8a8"/><rect x="1206" y="10.5" width="1" height="3.5" fill="#a8a8a8"/><rect x="1214" y="2.5" width="1" height="11.5" fill="#a8a8a8"/><rect x="1222" y="10.5" width="1" height="3.5" fill="#a8a8a8"/><rect x="1230" y="10.5" width="1" height="3.5" fill="#a8a8a8"/><rect x="1238" y="10.5" width="1" height="3.5" fill="#a8a8a8"/><rect x="1246" y="10.5" width="1" height="3.5" fill="#a8a8a8"/><rect x="1254" y="7" width="1" height="7" fill="#a8a8a8"/><rect x="1262" y="10.5" width="1" height="3.5" fill="#a8a8a8"/><rect x="1270" y="10.5" width="1" height="3.5" fill="#a8a8a8"/><rect x="1278" y="10.5" width="1" height="3.5" fill="#a8a8a8"/><rect x="1286" y="10.5" width="1" height="3.5" fill="#a8a8a8"/><rect x="1294" y="2.5" width="1" height="11.5" fill="#a8a8a8"/><rect x="1302" y="10.5" width="1" height="3.5" fill="#a8a8a8"/><rect x="1310" y="10.5" width="1" height="3.5" fill="#a8a8a8"/><rect x="1318" y="10.5" width="1" height="3.5" fill="#a8a8a8"/><rect x="0" y="13" width="1322" height="1" fill="#b4b4b4"/></svg>
<svg class="a" style="left:313px;top:54px" width="14" height="482"><rect x="2" y="0" width="12" height="1" fill="#a8a8a8"/><rect x="10" y="8" width="4" height="1" fill="#a8a8a8"/><rect x="10" y="16" width="4" height="1" fill="#a8a8a8"/><rect x="10" y="24" width="4" height="1" fill="#a8a8a8"/><rect x="10" y="32" width="4" height="1" fill="#a8a8a8"/><rect x="7" y="40" width="7" height="1" fill="#a8a8a8"/><rect x="10" y="48" width="4" height="1" fill="#a8a8a8"/><rect x="10" y="56" width="4" height="1" fill="#a8a8a8"/><rect x="10" y="64" width="4" height="1" fill="#a8a8a8"/><rect x="10" y="72" width="4" height="1" fill="#a8a8a8"/><rect x="2" y="80" width="12" height="1" fill="#a8a8a8"/><rect x="10" y="88" width="4" height="1" fill="#a8a8a8"/><rect x="10" y="96" width="4" height="1" fill="#a8a8a8"/><rect x="10" y="104" width="4" height="1" fill="#a8a8a8"/><rect x="10" y="112" width="4" height="1" fill="#a8a8a8"/><rect x="7" y="120" width="7" height="1" fill="#a8a8a8"/><rect x="10" y="128" width="4" height="1" fill="#a8a8a8"/><rect x="10" y="136" width="4" height="1" fill="#a8a8a8"/><rect x="10" y="144" width="4" height="1" fill="#a8a8a8"/><rect x="10" y="152" width="4" height="1" fill="#a8a8a8"/><rect x="2" y="160" width="12" height="1" fill="#a8a8a8"/><rect x="10" y="168" width="4" height="1" fill="#a8a8a8"/><rect x="10" y="176" width="4" height="1" fill="#a8a8a8"/><rect x="10" y="184" width="4" height="1" fill="#a8a8a8"/><rect x="10" y="192" width="4" height="1" fill="#a8a8a8"/><rect x="7" y="200" width="7" height="1" fill="#a8a8a8"/><rect x="10" y="208" width="4" height="1" fill="#a8a8a8"/><rect x="10" y="216" width="4" height="1" fill="#a8a8a8"/><rect x="10" y="224" width="4" height="1" fill="#a8a8a8"/><rect x="10" y="232" width="4" height="1" fill="#a8a8a8"/><rect x="2" y="240" width="12" height="1" fill="#a8a8a8"/><rect x="10" y="248" width="4" height="1" fill="#a8a8a8"/><rect x="10" y="256" width="4" height="1" fill="#a8a8a8"/><rect x="10" y="264" width="4" height="1" fill="#a8a8a8"/><rect x="10" y="272" width="4" height="1" fill="#a8a8a8"/><rect x="7" y="280" width="7" height="1" fill="#a8a8a8"/><rect x="10" y="288" width="4" height="1" fill="#a8a8a8"/><rect x="10" y="296" width="4" height="1" fill="#a8a8a8"/><rect x="10" y="304" width="4" height="1" fill="#a8a8a8"/><rect x="10" y="312" width="4" height="1" fill="#a8a8a8"/><rect x="2" y="320" width="12" height="1" fill="#a8a8a8"/><rect x="10" y="328" width="4" height="1" fill="#a8a8a8"/><rect x="10" y="336" width="4" height="1" fill="#a8a8a8"/><rect x="10" y="344" width="4" height="1" fill="#a8a8a8"/><rect x="10" y="352" width="4" height="1" fill="#a8a8a8"/><rect x="7" y="360" width="7" height="1" fill="#a8a8a8"/><rect x="10" y="368" width="4" height="1" fill="#a8a8a8"/><rect x="10" y="376" width="4" height="1" fill="#a8a8a8"/><rect x="10" y="384" width="4" height="1" fill="#a8a8a8"/><rect x="10" y="392" width="4" height="1" fill="#a8a8a8"/><rect x="2" y="400" width="12" height="1" fill="#a8a8a8"/><rect x="10" y="408" width="4" height="1" fill="#a8a8a8"/><rect x="10" y="416" width="4" height="1" fill="#a8a8a8"/><rect x="10" y="424" width="4" height="1" fill="#a8a8a8"/><rect x="10" y="432" width="4" height="1" fill="#a8a8a8"/><rect x="7" y="440" width="7" height="1" fill="#a8a8a8"/><rect x="10" y="448" width="4" height="1" fill="#a8a8a8"/><rect x="10" y="456" width="4" height="1" fill="#a8a8a8"/><rect x="10" y="464" width="4" height="1" fill="#a8a8a8"/><rect x="10" y="472" width="4" height="1" fill="#a8a8a8"/><rect x="2" y="480" width="12" height="1" fill="#a8a8a8"/><rect x="13" y="0" width="1" height="482" fill="#b4b4b4"/></svg>
<div class="a hatch" style="left:327px;top:54px;width:1290px;height:482px;"></div>
<div class="a " style="left:1616px;top:54px;width:1px;height:482px;border-left:1px dotted #bbb"></div>
<div class="a " style="left:1617px;top:54px;width:18px;height:482px;background:#f1f1f1"></div>
<div class="a " style="left:1620px;top:182px;width:12.5px;height:336px;background:#c1c1c1"></div>
<div class="a" style="left:1622px;top:61px;width:0;height:0;border-left:4.5px solid transparent;border-right:4.5px solid transparent;border-bottom:5px solid #505050"></div>
<div class="a" style="left:1622px;top:524px;width:0;height:0;border-left:4.5px solid transparent;border-right:4.5px solid transparent;border-top:5px solid #a3a3a3"></div>
<div class="a " style="left:313px;top:536px;width:1322px;height:2px;background:#c6c6c6"></div>
<div class="a ghatch" style="left:447px;top:54px;width:1051px;height:378px;"></div>
<div class="a " style="left:444px;top:54px;width:1px;height:468px;border-left:1px dotted #ababab"></div>
<div class="a " style="left:444px;top:521px;width:1057px;height:1px;border-top:1px dotted #ababab"></div>
<div class="a " style="left:1500px;top:54px;width:1px;height:468px;border-left:1px dotted #ababab"></div>
<div class="a " style="left:447px;top:54px;width:1px;height:378px;border-left:1px dotted #ababab"></div>
<div class="a " style="left:1497px;top:54px;width:1px;height:378px;border-left:1px dotted #ababab"></div>
<div class="a " style="left:447px;top:431.5px;width:1051px;height:2px;border-top:1px dotted #a0a0a0;border-bottom:1px dotted #b8b8b8"></div>
<div class="a " style="left:1385px;top:54px;width:113px;height:10px;background:#5b69b7;border-radius:0 0 4px 4px;box-shadow:0 1px 2px rgba(0,0,0,.3)"></div>
<div class="a " style="left:1401px;top:54px;width:14px;height:2px;background:#fff"></div>
<div class="a " style="left:447px;top:76px;width:1051px;height:1px;border-top:1px dotted #ababab"></div>
<div class="a " style="left:447px;top:105px;width:1051px;height:1px;border-top:1px dotted #ababab"></div>
<div class="a " style="left:447px;top:107px;width:1051px;height:1px;border-top:1px dotted #ababab"></div>
<div class="a " style="left:449px;top:107px;width:1047px;height:311px;border-left:1px dotted #ababab;border-right:1px dotted #ababab;border-bottom:1px dotted #ababab"></div>
<div class="a lbl" style="left:454px;top:109px;width:14px;height:9px;color:#888;font-size:7.5px;padding:1px 1px">Div</div>
<div class="a " style="left:452px;top:120px;width:1042px;height:284px;border:1px dotted #ababab"></div>
<div class="a lbl" style="left:455px;top:122px;width:23px;height:9px;font-size:8px;padding:1px 1px">Table</div>
<div class="a " style="left:456px;top:133px;width:1032px;height:23px;background:#e6e6e6"></div>
<div class="a t " style="left:490px;top:139.3px;font-size:10.5px;font-weight:bold;color:#222;letter-spacing:-0.4px">#</div>
<div class="a t " style="left:533px;top:139.3px;font-size:10.5px;font-weight:bold;color:#222;letter-spacing:-0.4px">Event Type</div>
<div class="a t " style="left:818px;top:139.3px;font-size:10.5px;font-weight:bold;color:#222;letter-spacing:-0.4px">Event Name</div>
<div class="a t " style="left:1116px;top:139.3px;font-size:10.5px;font-weight:bold;color:#222;letter-spacing:-0.4px">Event Location</div>
<div class="a t " style="left:1205px;top:139.3px;font-size:10.5px;font-weight:bold;color:#222;letter-spacing:-0.4px">Start Date</div>
<div class="a t " style="left:1308px;top:139.3px;font-size:10.5px;font-weight:bold;color:#222;letter-spacing:-0.4px">End Date</div>
<div class="a t " style="left:1432px;top:139.3px;font-size:10.5px;font-weight:bold;color:#222;letter-spacing:-0.4px">Action</div>
<div class="a " style="left:456px;top:156.4px;width:1032px;height:1px;background:#dcdcdc"></div>
<div class="a " style="left:1418px;top:165.9px;width:24px;height:14.5px;background:#e2e2e2;border-radius:3px;box-shadow:0 1px 1px rgba(0,0,0,.12)"></div>
<div class="a " style="left:1427.5px;top:170.4px;width:5px;height:4px;border:1px solid #333;border-top:none"></div>
<div class="a " style="left:1454px;top:158.20000000000002px;width:23px;height:23px;background:#cf4556;border-radius:3px;box-shadow:0 1px 1px rgba(0,0,0,.25)"></div>
<div class="a " style="left:1463px;top:165.9px;width:5px;height:7px;border:1px solid #fff"></div>
<div class="a " style="left:461px;top:156.9px;width:65px;height:47.6px;border:1px dotted #a6a6a6"></div>
<div class="a t" style="left:196.5px;top:160.4px;width:300px;text-align:right;font-size:10.6px;color:#4a4a4a">1</div>
<div class="a lbl" style="left:462px;top:157.9px;width:39px;height:11.5px;font-size:8.3px;letter-spacing:-0.3px;padding:1.2px 1.6px;color:#1a1a1a;box-shadow:0 1px 1px rgba(0,0,0,.08)">Container</div>
<div class="a " style="left:534px;top:156.9px;width:275.5px;height:47.6px;border:1px dotted #a6a6a6"></div>
<div class="a t" style="left:282.29999999999995px;top:160.4px;width:300px;text-align:right;font-size:10.6px;color:#4a4a4a">Kids</div>
<div class="a lbl" style="left:535px;top:157.9px;width:39px;height:11.5px;font-size:8.3px;letter-spacing:-0.3px;padding:1.2px 1.6px;color:#1a1a1a;box-shadow:0 1px 1px rgba(0,0,0,.08)">Container</div>
<div class="a " style="left:818px;top:156.9px;width:276.5px;height:47.6px;border:1px dotted #a6a6a6"></div>
<div class="a t" style="left:624.3px;top:160.4px;width:300px;text-align:right;font-size:10.6px;color:#4a4a4a">Kids Meet Israel</div>
<div class="a lbl" style="left:819px;top:157.9px;width:39px;height:11.5px;font-size:8.3px;letter-spacing:-0.3px;padding:1.2px 1.6px;color:#1a1a1a;box-shadow:0 1px 1px rgba(0,0,0,.08)">Container</div>
<div class="a " style="left:1103px;top:156.9px;width:94.6px;height:47.6px;border:1px dotted #a6a6a6"></div>
<div class="a t" style="left:863.3px;top:160.4px;width:300px;text-align:right;font-size:10.6px;color:#4a4a4a">Haifa, Israel</div>
<div class="a lbl" style="left:1104px;top:157.9px;width:39px;height:11.5px;font-size:8.3px;letter-spacing:-0.3px;padding:1.2px 1.6px;color:#1a1a1a;box-shadow:0 1px 1px rgba(0,0,0,.08)">Container</div>
<div class="a " style="left:1206px;top:156.9px;width:94.6px;height:47.6px;border:1px dotted #a6a6a6"></div>
<div class="a t" style="left:965.7px;top:160.4px;width:300px;text-align:right;font-size:10.6px;color:#4a4a4a">10/12/2023</div>
<div class="a lbl" style="left:1207px;top:157.9px;width:39px;height:11.5px;font-size:8.3px;letter-spacing:-0.3px;padding:1.2px 1.6px;color:#1a1a1a;box-shadow:0 1px 1px rgba(0,0,0,.08)">Container</div>
<div class="a " style="left:1309px;top:156.9px;width:94.7px;height:47.6px;border:1px dotted #a6a6a6"></div>
<div class="a t" style="left:1068.3px;top:160.4px;width:300px;text-align:right;font-size:10.6px;color:#4a4a4a">10/12/2023</div>
<div class="a lbl" style="left:1310px;top:157.9px;width:39px;height:11.5px;font-size:8.3px;letter-spacing:-0.3px;padding:1.2px 1.6px;color:#1a1a1a;box-shadow:0 1px 1px rgba(0,0,0,.08)">Container</div>
<div class="a " style="left:1412px;top:156.9px;width:72.3px;height:47.6px;border:1px dotted #a6a6a6"></div>
<div class="a lbl" style="left:1413px;top:157.9px;width:39px;height:11.5px;font-size:8.3px;letter-spacing:-0.3px;padding:1.2px 1.6px;color:#1a1a1a;box-shadow:0 1px 1px rgba(0,0,0,.08)">Container</div>
<div class="a " style="left:456px;top:206.6px;width:1032px;height:1px;background:#dcdcdc"></div>
<div class="a " style="left:456px;top:206.6px;width:1032px;height:48.1px;background:#e3e3e3"></div>
<div class="a ghatch" style="left:461px;top:207.1px;width:65px;height:47.1px;"></div>
<div class="a ghatch" style="left:534px;top:207.1px;width:275.5px;height:47.1px;"></div>
<div class="a ghatch" style="left:818px;top:207.1px;width:276.5px;height:47.1px;"></div>
<div class="a ghatch" style="left:1103px;top:207.1px;width:94.6px;height:47.1px;"></div>
<div class="a ghatch" style="left:1206px;top:207.1px;width:94.6px;height:47.1px;"></div>
<div class="a ghatch" style="left:1309px;top:207.1px;width:94.7px;height:47.1px;"></div>
<div class="a ghatch" style="left:1412px;top:207.1px;width:72.3px;height:47.1px;"></div>
<div class="a " style="left:1418px;top:216.1px;width:24px;height:14.5px;background:#e2e2e2;border-radius:3px;box-shadow:0 1px 1px rgba(0,0,0,.12)"></div>
<div class="a " style="left:1427.5px;top:220.6px;width:5px;height:4px;border:1px solid #333;border-top:none"></div>
<div class="a " style="left:1454px;top:208.4px;width:23px;height:23px;background:#cf4556;border-radius:3px;box-shadow:0 1px 1px rgba(0,0,0,.25)"></div>
<div class="a " style="left:1463px;top:216.1px;width:5px;height:7px;border:1px solid #fff"></div>
<div class="a " style="left:461px;top:207.1px;width:65px;height:47.1px;border:1px dotted #a6a6a6"></div>
<div class="a t" style="left:196.5px;top:210.6px;width:300px;text-align:right;font-size:10.6px;color:#4a4a4a">2</div>
<div class="a lbl" style="left:462px;top:208.1px;width:39px;height:11.5px;font-size:8.3px;letter-spacing:-0.3px;padding:1.2px 1.6px;color:#1a1a1a;box-shadow:0 1px 1px rgba(0,0,0,.08)">Container</div>
<div class="a " style="left:534px;top:207.1px;width:275.5px;height:47.1px;border:1px dotted #a6a6a6"></div>
<div class="a t" style="left:319.29999999999995px;top:210.6px;width:300px;text-align:right;font-size:10.6px;color:#4a4a4a">Award Ceremony</div>
<div class="a lbl" style="left:535px;top:208.1px;width:39px;height:11.5px;font-size:8.3px;letter-spacing:-0.3px;padding:1.2px 1.6px;color:#1a1a1a;box-shadow:0 1px 1px rgba(0,0,0,.08)">Container</div>
<div class="a " style="left:818px;top:207.1px;width:276.5px;height:47.1px;border:1px dotted #a6a6a6"></div>
<div class="a t" style="left:567.2px;top:210.6px;width:300px;text-align:right;font-size:10.6px;color:#4a4a4a">Visit India</div>
<div class="a lbl" style="left:819px;top:208.1px;width:39px;height:11.5px;font-size:8.3px;letter-spacing:-0.3px;padding:1.2px 1.6px;color:#1a1a1a;box-shadow:0 1px 1px rgba(0,0,0,.08)">Container</div>
<div class="a " style="left:1103px;top:207.1px;width:94.6px;height:47.1px;border:1px dotted #a6a6a6"></div>
<div class="a t" style="left:861.7px;top:210.6px;width:300px;text-align:right;font-size:10.6px;color:#4a4a4a">Goa, India</div>
<div class="a lbl" style="left:1104px;top:208.1px;width:39px;height:11.5px;font-size:8.3px;letter-spacing:-0.3px;padding:1.2px 1.6px;color:#1a1a1a;box-shadow:0 1px 1px rgba(0,0,0,.08)">Container</div>
<div class="a " style="left:1206px;top:207.1px;width:94.6px;height:47.1px;border:1px dotted #a6a6a6"></div>
<div class="a t" style="left:965.7px;top:210.6px;width:300px;text-align:right;font-size:10.6px;color:#4a4a4a">11/12/2023</div>
<div class="a lbl" style="left:1207px;top:208.1px;width:39px;height:11.5px;font-size:8.3px;letter-spacing:-0.3px;padding:1.2px 1.6px;color:#1a1a1a;box-shadow:0 1px 1px rgba(0,0,0,.08)">Container</div>
<div class="a " style="left:1309px;top:207.1px;width:94.7px;height:47.1px;border:1px dotted #a6a6a6"></div>
<div class="a t" style="left:1068.3px;top:210.6px;width:300px;text-align:right;font-size:10.6px;color:#4a4a4a">11/12/2023</div>
<div class="a lbl" style="left:1310px;top:208.1px;width:39px;height:11.5px;font-size:8.3px;letter-spacing:-0.3px;padding:1.2px 1.6px;color:#1a1a1a;box-shadow:0 1px 1px rgba(0,0,0,.08)">Container</div>
<div class="a " style="left:1412px;top:207.1px;width:72.3px;height:47.1px;border:1px dotted #a6a6a6"></div>
<div class="a lbl" style="left:1413px;top:208.1px;width:39px;height:11.5px;font-size:8.3px;letter-spacing:-0.3px;padding:1.2px 1.6px;color:#1a1a1a;box-shadow:0 1px 1px rgba(0,0,0,.08)">Container</div>
<div class="a " style="left:456px;top:256.5px;width:1032px;height:1px;background:#dcdcdc"></div>
<div class="a " style="left:1418px;top:266.0px;width:24px;height:14.5px;background:#e2e2e2;border-radius:3px;box-shadow:0 1px 1px rgba(0,0,0,.12)"></div>
<div class="a " style="left:1427.5px;top:270.5px;width:5px;height:4px;border:1px solid #333;border-top:none"></div>
<div class="a " style="left:1454px;top:258.3px;width:23px;height:23px;background:#cf4556;border-radius:3px;box-shadow:0 1px 1px rgba(0,0,0,.25)"></div>
<div class="a " style="left:1463px;top:266.0px;width:5px;height:7px;border:1px solid #fff"></div>
<div class="a " style="left:461px;top:257.0px;width:65px;height:47.2px;border:1px dotted #a6a6a6"></div>
<div class="a t" style="left:196.5px;top:260.5px;width:300px;text-align:right;font-size:10.6px;color:#4a4a4a">3</div>
<div class="a lbl" style="left:462px;top:258.0px;width:39px;height:11.5px;font-size:8.3px;letter-spacing:-0.3px;padding:1.2px 1.6px;color:#1a1a1a;box-shadow:0 1px 1px rgba(0,0,0,.08)">Container</div>
<div class="a " style="left:534px;top:257.0px;width:275.5px;height:47.2px;border:1px dotted #a6a6a6"></div>
<div class="a t" style="left:317px;top:260.5px;width:300px;text-align:right;font-size:10.6px;color:#4a4a4a">Company Outing</div>
<div class="a lbl" style="left:535px;top:258.0px;width:39px;height:11.5px;font-size:8.3px;letter-spacing:-0.3px;padding:1.2px 1.6px;color:#1a1a1a;box-shadow:0 1px 1px rgba(0,0,0,.08)">Container</div>
<div class="a " style="left:818px;top:257.0px;width:276.5px;height:47.2px;border:1px dotted #a6a6a6"></div>
<div class="a t" style="left:582.8px;top:260.5px;width:300px;text-align:right;font-size:10.6px;color:#4a4a4a">Team Outing</div>
<div class="a lbl" style="left:819px;top:258.0px;width:39px;height:11.5px;font-size:8.3px;letter-spacing:-0.3px;padding:1.2px 1.6px;color:#1a1a1a;box-shadow:0 1px 1px rgba(0,0,0,.08)">Container</div>
<div class="a " style="left:1103px;top:257.0px;width:94.6px;height:47.2px;border:1px dotted #a6a6a6"></div>
<div class="a t" style="left:861.7px;top:260.5px;width:300px;text-align:right;font-size:10.6px;color:#4a4a4a">Goa, India</div>
<div class="a lbl" style="left:1104px;top:258.0px;width:39px;height:11.5px;font-size:8.3px;letter-spacing:-0.3px;padding:1.2px 1.6px;color:#1a1a1a;box-shadow:0 1px 1px rgba(0,0,0,.08)">Container</div>
<div class="a " style="left:1206px;top:257.0px;width:94.6px;height:47.2px;border:1px dotted #a6a6a6"></div>
<div class="a t" style="left:965.7px;top:260.5px;width:300px;text-align:right;font-size:10.6px;color:#4a4a4a">21/12/2023</div>
<div class="a lbl" style="left:1207px;top:258.0px;width:39px;height:11.5px;font-size:8.3px;letter-spacing:-0.3px;padding:1.2px 1.6px;color:#1a1a1a;box-shadow:0 1px 1px rgba(0,0,0,.08)">Container</div>
<div class="a " style="left:1309px;top:257.0px;width:94.7px;height:47.2px;border:1px dotted #a6a6a6"></div>
<div class="a t" style="left:1068.3px;top:260.5px;width:300px;text-align:right;font-size:10.6px;color:#4a4a4a">15/12/2023</div>
<div class="a lbl" style="left:1310px;top:258.0px;width:39px;height:11.5px;font-size:8.3px;letter-spacing:-0.3px;padding:1.2px 1.6px;color:#1a1a1a;box-shadow:0 1px 1px rgba(0,0,0,.08)">Container</div>
<div class="a " style="left:1412px;top:257.0px;width:72.3px;height:47.2px;border:1px dotted #a6a6a6"></div>
<div class="a lbl" style="left:1413px;top:258.0px;width:39px;height:11.5px;font-size:8.3px;letter-spacing:-0.3px;padding:1.2px 1.6px;color:#1a1a1a;box-shadow:0 1px 1px rgba(0,0,0,.08)">Container</div>
<div class="a " style="left:456px;top:304.5px;width:1032px;height:1px;background:#dcdcdc"></div>
<div class="a " style="left:455px;top:319.5px;width:1035px;height:71px;border:1px dotted #ababab"></div>
<div class="a lbl" style="left:456px;top:321px;width:37px;height:10px;font-size:8px;padding:1px 2px">Paginator</div>
<div class="a t " style="left:1213px;top:352px;font-size:9.5px;color:#777">Items per page:</div>
<div class="a " style="left:1286px;top:347px;width:36px;height:21px;border:1px solid #d0d0d0;border-radius:3px"></div>
<div class="a t " style="left:1291px;top:352px;font-size:10.5px;color:#555">10</div>
<div class="a" style="left:1305px;top:355px;width:0;height:0;border-left:4px solid transparent;border-right:4px solid transparent;border-top:4.5px solid #666"></div>
<div class="a t " style="left:1351px;top:351px;font-size:9.5px;color:#777">1 &ndash; 3 of 3</div>
<svg class="a" style="left:1428px;top:350px" width="42" height="14" viewBox="0 0 42 14"><path d="M8 1.5L3 7L8 12.5" fill="none" stroke="#aaa" stroke-width="1.3"/><path d="M34 1.5L39 7L34 12.5" fill="none" stroke="#aaa" stroke-width="1.3"/></svg>
<div class="a lbl" style="left:448.5px;top:435.4px;width:20px;height:9px;font-size:8.3px;letter-spacing:-0.2px;padding:0.5px 1.5px;color:#777;background:#fff">Card</div>
<div class="a " style="left:447px;top:433px;width:1050px;height:74px;border-left:1px dotted #b4b4b4;border-right:1px dotted #b4b4b4;border-bottom:1px dotted #b4b4b4"></div>
<div class="a " style="left:450px;top:446.5px;width:1045px;height:47.5px;border:1px dotted #b4b4b4"></div>
<div class="a lbl" style="left:451px;top:447.7px;width:34px;height:10px;font-size:8.5px;letter-spacing:-0.2px;padding:0.8px 1.5px;color:#777;background:#fff">Subform</div>
<div class="a " style="left:313px;top:538px;width:1322px;height:30px;background:#f2f2f2"></div>
<div class="a " style="left:317.5px;top:542px;width:113px;height:22px;background:#6cb4e0;border:1px solid #9fcbe8;border-bottom:none"></div>
<div class="a t " style="left:326px;top:548px;font-size:11px;color:#fff;letter-spacing:-0.5px">&lt;/&gt;</div>
<div class="a t " style="left:355px;top:548.5px;font-size:11px;color:#fff;font-weight:bold">Template</div>
<svg class="a" style="left:410px;top:547px" width="12" height="12" viewBox="0 0 12 12"><path d="M1.5 5A4.6 4.6 0 0 1 10 3.5" fill="none" stroke="#9a9a9a" stroke-width="2"/><path d="M11.5 .5V5H7Z" fill="#9a9a9a"/><path d="M10.5 7A4.6 4.6 0 0 1 2 8.5" fill="none" stroke="#9a9a9a" stroke-width="2"/><path d="M.5 11.5V7H5Z" fill="#9a9a9a"/></svg>
<div class="a " style="left:435.5px;top:542px;width:100.5px;height:22px;background:#f0f0f0;border:1px solid #c4c4c4;border-bottom:none"></div>
<svg class="a" style="left:444px;top:546.5px" width="13" height="13" viewBox="0 0 13 13"><rect x="5.2" y="0" width="2.6" height="13" fill="#666" transform="rotate(0 6.5 6.5)"/><rect x="5.2" y="0" width="2.6" height="13" fill="#666" transform="rotate(45 6.5 6.5)"/><rect x="5.2" y="0" width="2.6" height="13" fill="#666" transform="rotate(90 6.5 6.5)"/><rect x="5.2" y="0" width="2.6" height="13" fill="#666" transform="rotate(135 6.5 6.5)"/><circle cx="6.5" cy="6.5" r="4.6" fill="#666"/><circle cx="6.5" cy="6.5" r="1.8" fill="#f0f0f0"/></svg>
<div class="a t " style="left:470px;top:548.5px;font-size:11px;color:#777">Component</div>
<div class="a " style="left:540px;top:542px;width:99.5px;height:22px;background:#f0f0f0;border:1px solid #c4c4c4;border-bottom:none"></div>
<svg class="a" style="left:549px;top:547px" width="16" height="12" viewBox="0 0 16 12"><rect x=".7" y=".7" width="14.6" height="10.6" fill="none" stroke="#666" stroke-width="1.3"/><path d="M2.5 9.5L6 5.5L8.5 8L10.5 6.5L13.5 9.5Z" fill="#666"/><circle cx="11" cy="3.5" r="1.2" fill="#666"/></svg>
<div class="a t " style="left:578px;top:548.5px;font-size:11px;color:#777">Styles</div>
<svg class="a" style="left:618px;top:547px" width="12" height="12" viewBox="0 0 12 12"><path d="M1.5 5A4.6 4.6 0 0 1 10 3.5" fill="none" stroke="#9a9a9a" stroke-width="2"/><path d="M11.5 .5V5H7Z" fill="#9a9a9a"/><path d="M10.5 7A4.6 4.6 0 0 1 2 8.5" fill="none" stroke="#9a9a9a" stroke-width="2"/><path d="M.5 11.5V7H5Z" fill="#9a9a9a"/></svg>
<div class="a " style="left:1499px;top:542px;width:131.5px;height:22px;background:#f0f0f0;border:1px solid #c4c4c4;border-bottom:none"></div>
<svg class="a" style="left:1506px;top:547px" width="7" height="13" viewBox="0 0 7 13"><path d="M4.5 0L1 7H3.5L2.5 13L6 5.5H3.5Z" fill="#777"/></svg>
<div class="a t " style="left:1531px;top:548.5px;font-size:11px;color:#777">Live Preview Logs</div>
<div class="a " style="left:313px;top:564px;width:1322px;height:4px;background:#0096d6"></div>
<div class="a " style="left:313px;top:568px;width:1318px;height:342px;background:#fff;border-right:1px solid #e0e0e0"></div>
<div class="a " style="left:1631px;top:568px;width:3px;height:342px;background:#fff"></div>
<div class="a " style="left:1630.5px;top:570px;width:4px;height:70px;background:#c1c1c1"></div>
<div class="a code" style="left:318px;top:569.40px;width:26px;text-align:right;color:#237893">1</div><div class="a code" style="left:318px;top:584.59px;width:26px;text-align:right;color:#237893">2</div><div class="a code" style="left:318px;top:599.78px;width:26px;text-align:right;color:#237893">3</div><div class="a code" style="left:318px;top:614.97px;width:26px;text-align:right;color:#237893">4</div><div class="a code" style="left:318px;top:630.16px;width:26px;text-align:right;color:#237893">5</div><div class="a code" style="left:318px;top:645.35px;width:26px;text-align:right;color:#237893">6</div><div class="a code" style="left:318px;top:660.54px;width:26px;text-align:right;color:#237893">7</div><div class="a code" style="left:318px;top:675.73px;width:26px;text-align:right;color:#237893">8</div><div class="a code" style="left:318px;top:690.92px;width:26px;text-align:right;color:#237893">9</div><div class="a code" style="left:318px;top:706.11px;width:26px;text-align:right;color:#237893">10</div><div class="a code" style="left:318px;top:721.30px;width:26px;text-align:right;color:#237893">11</div><div class="a code" style="left:318px;top:736.49px;width:26px;text-align:right;color:#237893">12</div><div class="a code" style="left:318px;top:751.68px;width:26px;text-align:right;color:#237893">13</div><div class="a code" style="left:318px;top:766.87px;width:26px;text-align:right;color:#237893">14</div><div class="a code" style="left:318px;top:782.06px;width:26px;text-align:right;color:#237893">15</div><div class="a code" style="left:318px;top:797.25px;width:26px;text-align:right;color:#237893">16</div><div class="a code" style="left:318px;top:812.44px;width:26px;text-align:right;color:#237893">17</div><div class="a code" style="left:318px;top:827.63px;width:26px;text-align:right;color:#237893">18</div><div class="a code" style="left:318px;top:842.82px;width:26px;text-align:right;color:#237893">19</div><div class="a code" style="left:318px;top:858.01px;width:26px;text-align:right;color:#237893">20</div><div class="a code" style="left:318px;top:873.20px;width:26px;text-align:right;color:#237893">21</div><div class="a code" style="left:318px;top:888.39px;width:26px;text-align:right;color:#237893">22</div><div class="a code" style="left:318px;top:903.58px;width:26px;text-align:right;color:#237893">23</div>
<div class="a" style="left:361.0px;top:584.59px;width:1px;height:15.19px;background:#d3d3d3"></div><div class="a" style="left:361.0px;top:599.78px;width:1px;height:15.19px;background:#d3d3d3"></div><div class="a" style="left:385.6px;top:599.78px;width:1px;height:15.19px;background:#d3d3d3"></div><div class="a" style="left:361.0px;top:614.97px;width:1px;height:15.19px;background:#d3d3d3"></div><div class="a" style="left:385.6px;top:614.97px;width:1px;height:15.19px;background:#d3d3d3"></div><div class="a" style="left:410.2px;top:614.97px;width:1px;height:15.19px;background:#d3d3d3"></div><div class="a" style="left:361.0px;top:630.16px;width:1px;height:15.19px;background:#d3d3d3"></div><div class="a" style="left:385.6px;top:630.16px;width:1px;height:15.19px;background:#d3d3d3"></div><div class="a" style="left:410.2px;top:630.16px;width:1px;height:15.19px;background:#d3d3d3"></div><div class="a" style="left:361.0px;top:645.35px;width:1px;height:15.19px;background:#d3d3d3"></div><div class="a" style="left:385.6px;top:645.35px;width:1px;height:15.19px;background:#d3d3d3"></div><div class="a" style="left:410.2px;top:645.35px;width:1px;height:15.19px;background:#d3d3d3"></div><div class="a" style="left:434.8px;top:645.35px;width:1px;height:15.19px;background:#d3d3d3"></div><div class="a" style="left:361.0px;top:660.54px;width:1px;height:15.19px;background:#d3d3d3"></div><div class="a" style="left:385.6px;top:660.54px;width:1px;height:15.19px;background:#d3d3d3"></div><div class="a" style="left:410.2px;top:660.54px;width:1px;height:15.19px;background:#d3d3d3"></div><div class="a" style="left:434.8px;top:660.54px;width:1px;height:15.19px;background:#d3d3d3"></div><div class="a" style="left:459.4px;top:660.54px;width:1px;height:15.19px;background:#d3d3d3"></div><div class="a" style="left:361.0px;top:675.73px;width:1px;height:15.19px;background:#d3d3d3"></div><div class="a" style="left:385.6px;top:675.73px;width:1px;height:15.19px;background:#d3d3d3"></div><div class="a" style="left:410.2px;top:675.73px;width:1px;height:15.19px;background:#d3d3d3"></div><div class="a" style="left:434.8px;top:675.73px;width:1px;height:15.19px;background:#d3d3d3"></div><div class="a" style="left:459.4px;top:675.73px;width:1px;height:15.19px;background:#d3d3d3"></div><div class="a" style="left:484.0px;top:675.73px;width:1px;height:15.19px;background:#d3d3d3"></div><div class="a" style="left:361.0px;top:690.92px;width:1px;height:15.19px;background:#d3d3d3"></div><div class="a" style="left:385.6px;top:690.92px;width:1px;height:15.19px;background:#d3d3d3"></div><div class="a" style="left:410.2px;top:690.92px;width:1px;height:15.19px;background:#d3d3d3"></div><div class="a" style="left:434.8px;top:690.92px;width:1px;height:15.19px;background:#d3d3d3"></div><div class="a" style="left:361.0px;top:706.11px;width:1px;height:15.19px;background:#d3d3d3"></div><div class="a" style="left:385.6px;top:706.11px;width:1px;height:15.19px;background:#d3d3d3"></div><div class="a" style="left:410.2px;top:706.11px;width:1px;height:15.19px;background:#d3d3d3"></div><div class="a" style="left:361.0px;top:721.30px;width:1px;height:15.19px;background:#d3d3d3"></div><div class="a" style="left:385.6px;top:721.30px;width:1px;height:15.19px;background:#d3d3d3"></div><div class="a" style="left:410.2px;top:721.30px;width:1px;height:15.19px;background:#d3d3d3"></div><div class="a" style="left:361.0px;top:736.49px;width:1px;height:15.19px;background:#d3d3d3"></div><div class="a" style="left:385.6px;top:736.49px;width:1px;height:15.19px;background:#d3d3d3"></div><div class="a" style="left:410.2px;top:736.49px;width:1px;height:15.19px;background:#d3d3d3"></div><div class="a" style="left:434.8px;top:736.49px;width:1px;height:15.19px;background:#d3d3d3"></div><div class="a" style="left:361.0px;top:751.68px;width:1px;height:15.19px;background:#d3d3d3"></div><div class="a" style="left:385.6px;top:751.68px;width:1px;height:15.19px;background:#d3d3d3"></div><div class="a" style="left:410.2px;top:751.68px;width:1px;height:15.19px;background:#d3d3d3"></div><div class="a" style="left:434.8px;top:751.68px;width:1px;height:15.19px;background:#d3d3d3"></div><div class="a" style="left:459.4px;top:751.68px;width:1px;height:15.19px;background:#d3d3d3"></div><div class="a" style="left:361.0px;top:766.87px;width:1px;height:15.19px;background:#d3d3d3"></div><div class="a" style="left:385.6px;top:766.87px;width:1px;height:15.19px;background:#d3d3d3"></div><div class="a" style="left:410.2px;top:766.87px;width:1px;height:15.19px;background:#d3d3d3"></div><div class="a" style="left:434.8px;top:766.87px;width:1px;height:15.19px;background:#d3d3d3"></div><div class="a" style="left:459.4px;top:766.87px;width:1px;height:15.19px;background:#d3d3d3"></div><div class="a" style="left:361.0px;top:782.06px;width:1px;height:15.19px;background:#d3d3d3"></div><div class="a" style="left:385.6px;top:782.06px;width:1px;height:15.19px;background:#d3d3d3"></div><div class="a" style="left:410.2px;top:782.06px;width:1px;height:15.19px;background:#d3d3d3"></div><div class="a" style="left:434.8px;top:782.06px;width:1px;height:15.19px;background:#d3d3d3"></div><div class="a" style="left:459.4px;top:782.06px;width:1px;height:15.19px;background:#d3d3d3"></div><div class="a" style="left:361.0px;top:797.25px;width:1px;height:15.19px;background:#d3d3d3"></div><div class="a" style="left:385.6px;top:797.25px;width:1px;height:15.19px;background:#d3d3d3"></div><div class="a" style="left:410.2px;top:797.25px;width:1px;height:15.19px;background:#d3d3d3"></div><div class="a" style="left:434.8px;top:797.25px;width:1px;height:15.19px;background:#d3d3d3"></div><div class="a" style="left:459.4px;top:797.25px;width:1px;height:15.19px;background:#d3d3d3"></div><div class="a" style="left:484.0px;top:797.25px;width:1px;height:15.19px;background:#d3d3d3"></div><div class="a" style="left:361.0px;top:812.44px;width:1px;height:15.19px;background:#d3d3d3"></div><div class="a" style="left:385.6px;top:812.44px;width:1px;height:15.19px;background:#d3d3d3"></div><div class="a" style="left:410.2px;top:812.44px;width:1px;height:15.19px;background:#d3d3d3"></div><div class="a" style="left:434.8px;top:812.44px;width:1px;height:15.19px;background:#d3d3d3"></div><div class="a" style="left:459.4px;top:812.44px;width:1px;height:15.19px;background:#d3d3d3"></div><div class="a" style="left:484.0px;top:812.44px;width:1px;height:15.19px;background:#d3d3d3"></div><div class="a" style="left:361.0px;top:827.63px;width:1px;height:15.19px;background:#d3d3d3"></div><div class="a" style="left:385.6px;top:827.63px;width:1px;height:15.19px;background:#d3d3d3"></div><div class="a" style="left:410.2px;top:827.63px;width:1px;height:15.19px;background:#d3d3d3"></div><div class="a" style="left:434.8px;top:827.63px;width:1px;height:15.19px;background:#d3d3d3"></div><div class="a" style="left:459.4px;top:827.63px;width:1px;height:15.19px;background:#d3d3d3"></div><div class="a" style="left:484.0px;top:827.63px;width:1px;height:15.19px;background:#d3d3d3"></div><div class="a" style="left:508.6px;top:827.63px;width:1px;height:15.19px;background:#d3d3d3"></div><div class="a" style="left:361.0px;top:842.82px;width:1px;height:15.19px;background:#d3d3d3"></div><div class="a" style="left:385.6px;top:842.82px;width:1px;height:15.19px;background:#d3d3d3"></div><div class="a" style="left:410.2px;top:842.82px;width:1px;height:15.19px;background:#d3d3d3"></div><div class="a" style="left:434.8px;top:842.82px;width:1px;height:15.19px;background:#d3d3d3"></div><div class="a" style="left:459.4px;top:842.82px;width:1px;height:15.19px;background:#d3d3d3"></div><div class="a" style="left:484.0px;top:842.82px;width:1px;height:15.19px;background:#d3d3d3"></div><div class="a" style="left:508.6px;top:842.82px;width:1px;height:15.19px;background:#d3d3d3"></div><div class="a" style="left:533.2px;top:842.82px;width:1px;height:15.19px;background:#d3d3d3"></div><div class="a" style="left:361.0px;top:858.01px;width:1px;height:15.19px;background:#d3d3d3"></div><div class="a" style="left:385.6px;top:858.01px;width:1px;height:15.19px;background:#d3d3d3"></div><div class="a" style="left:410.2px;top:858.01px;width:1px;height:15.19px;background:#d3d3d3"></div><div class="a" style="left:434.8px;top:858.01px;width:1px;height:15.19px;background:#d3d3d3"></div><div class="a" style="left:459.4px;top:858.01px;width:1px;height:15.19px;background:#d3d3d3"></div><div class="a" style="left:484.0px;top:858.01px;width:1px;height:15.19px;background:#d3d3d3"></div><div class="a" style="left:508.6px;top:858.01px;width:1px;height:15.19px;background:#d3d3d3"></div><div class="a" style="left:361.0px;top:873.20px;width:1px;height:15.19px;background:#d3d3d3"></div><div class="a" style="left:385.6px;top:873.20px;width:1px;height:15.19px;background:#d3d3d3"></div><div class="a" style="left:410.2px;top:873.20px;width:1px;height:15.19px;background:#d3d3d3"></div><div class="a" style="left:434.8px;top:873.20px;width:1px;height:15.19px;background:#d3d3d3"></div><div class="a" style="left:459.4px;top:873.20px;width:1px;height:15.19px;background:#d3d3d3"></div><div class="a" style="left:484.0px;top:873.20px;width:1px;height:15.19px;background:#d3d3d3"></div><div class="a" style="left:361.0px;top:888.39px;width:1px;height:15.19px;background:#d3d3d3"></div><div class="a" style="left:385.6px;top:888.39px;width:1px;height:15.19px;background:#d3d3d3"></div><div class="a" style="left:410.2px;top:888.39px;width:1px;height:15.19px;background:#d3d3d3"></div><div class="a" style="left:434.8px;top:888.39px;width:1px;height:15.19px;background:#d3d3d3"></div><div class="a" style="left:459.4px;top:888.39px;width:1px;height:15.19px;background:#d3d3d3"></div><div class="a" style="left:361.0px;top:903.58px;width:1px;height:15.19px;background:#d3d3d3"></div><div class="a" style="left:385.6px;top:903.58px;width:1px;height:15.19px;background:#d3d3d3"></div><div class="a" style="left:410.2px;top:903.58px;width:1px;height:15.19px;background:#d3d3d3"></div><div class="a" style="left:434.8px;top:903.58px;width:1px;height:15.19px;background:#d3d3d3"></div><div class="a" style="left:459.4px;top:903.58px;width:1px;height:15.19px;background:#d3d3d3"></div>
<div class="a " style="left:655px;top:583.3px;width:444px;height:13.4px;background:#e3e8ef"></div>
<div class="a" style="left:313px;top:568px;width:1317px;height:342px;overflow:hidden"><div class="a" style="left:-313px;top:-568px;width:1920px;height:910px"><div class="a code" style="left:361.00px;top:569.40px"><span class="dl">&lt;</span><span class="tg">c-container</span> <span class="pl">[</span><span class="at">formGroup</span><span class="pl">]</span><span class="dl">=</span><span class="sv">"screenFormGroup"</span> <span class="at">noCollable</span> <span class="pl">[</span><span class="at">magic</span><span class="pl">]</span><span class="dl">=</span><span class="sv">"mgc.EventList"</span> <span class="at">data-comp-id</span><span class="dl">=</span><span class="sv">"c-container.1"</span><span class="dl">&gt;</span></div><div class="a code" style="left:385.60px;top:584.59px"><span class="dl">&lt;</span><span class="tg">c-card</span> <span class="at">id</span><span class="dl">=</span><span class="sv">"card.1"</span> <span class="pl">[</span><span class="at">magic</span><span class="pl">]</span><span class="dl">=</span><span class="sv">"mgc.MainGroup"</span> <span class="pl">[</span><span class="at">style.display</span><span class="pl">]</span><span class="dl">=</span><span class="sv">"mg.getVisible(mgc.MainGroup)=='visible'?'block':'none'"</span> <span class="at">data-comp-id</span><span class="dl">=</span><span class="sv">"card.1"</span><span class="dl">&gt;</span></div><div class="a code" style="left:410.20px;top:599.78px"><span class="dl">&lt;</span><span class="tg">c-container</span> <span class="at">id</span><span class="dl">=</span><span class="sv">"c-container.2"</span> <span class="at">class</span><span class="dl">=</span><span class="sv">"allSideSpacing-containers"</span> <span class="at">data-comp-id</span><span class="dl">=</span><span class="sv">"c-container.2"</span><span class="dl">&gt;</span></div><div class="a code" style="left:434.80px;top:614.97px"><span class="dl">&lt;</span><span class="tg">h4</span> <span class="at">id</span><span class="dl">=</span><span class="sv">"h4.1"</span> <span class="at">class</span><span class="dl">=</span><span class="sv">"horizontal-line-bottom"</span> <span class="at">data-comp-id</span><span class="dl">=</span><span class="sv">"h4.1"</span><span class="dl">&gt;</span><span class="pl">Events</span><span class="dl">&lt;/</span><span class="tg">h4</span><span class="dl">&gt;</span></div><div class="a code" style="left:434.80px;top:630.16px"><span class="dl">&lt;</span><span class="tg">c-row</span> <span class="at">id</span><span class="dl">=</span><span class="sv">"c-row.1"</span> <span class="at">data-comp-id</span><span class="dl">=</span><span class="sv">"c-row.1"</span><span class="dl">&gt;</span></div><div class="a code" style="left:459.40px;top:645.35px"><span class="dl">&lt;</span><span class="tg">c-col</span> <span class="at">id</span><span class="dl">=</span><span class="sv">"c-column.1"</span> <span class="at">class</span><span class="dl">=</span><span class="sv">"align-items-end smallSpacingBottomOutsideContainer"</span> <span class="at">data-comp-id</span><span class="dl">=</span><span class="sv">"c-column.1"</span><span class="dl">&gt;</span></div><div class="a code" style="left:484.00px;top:660.54px"><span class="dl">&lt;</span><span class="tg">button</span> <span class="at">id</span><span class="dl">=</span><span class="sv">"button.1"</span> <span class="pl">[</span><span class="at">magic</span><span class="pl">]</span><span class="dl">=</span><span class="sv">"mgc.btnCreateEvent"</span> <span class="at">mat-raised-button</span> <span class="at">color</span><span class="dl">=</span><span class="sv">"primary"</span> <span class="at">icon-start</span> <span class="at">name</span><span class="dl">=</span><span class="sv">"calendar_today"</span> <span class="at">class</span><span class="dl">=</span><span class="sv">"smallSpacingTopOutsideContainer"</span> <span class="at">data-comp-id</span><span class="dl">=</span><span class="sv">"button.1"</span><span class="dl">&gt;</span></div><div class="a code" style="left:508.60px;top:675.73px"><span class="dl">&lt;</span><span class="tg">mat-icon</span><span class="dl">&gt;</span><span class="pl">calendar_today</span><span class="dl">&lt;/</span><span class="tg">mat-icon</span><span class="dl">&gt;</span><span class="pl">Create Event</span><span class="dl">&lt;/</span><span class="tg">button</span><span class="dl">&gt;</span></div><div class="a code" style="left:459.40px;top:690.92px"><span class="dl">&lt;/</span><span class="tg">c-col</span><span class="dl">&gt;</span></div><div class="a code" style="left:434.80px;top:706.11px"><span class="dl">&lt;/</span><span class="tg">c-row</span><span class="dl">&gt;</span></div><div class="a code" style="left:434.80px;top:721.30px"><span class="dl">&lt;</span><span class="tg">div</span> <span class="pl">#</span><span class="at">tableContainer</span> <span class="at">id</span><span class="dl">=</span><span class="sv">"table-container.1"</span> <span class="at">class</span><span class="dl">=</span><span class="sv">"ScrollableSection"</span> <span class="at">data-comp-id</span><span class="dl">=</span><span class="sv">"div.1"</span><span class="dl">&gt;</span></div><div class="a code" style="left:459.40px;top:736.49px"><span class="dl">&lt;</span><span class="tg">mat-table</span> <span class="pl">#</span><span class="at">table</span> <span class="pl">[</span><span class="at">dataSource</span><span class="pl">]</span><span class="dl">=</span><span class="sv">"dataSource"</span> <span class="at">matSort</span> <span class="at">matSortDisableClear</span> <span class="pl">(</span><span class="at">matSortChange</span><span class="pl">)</span><span class="dl">=</span><span class="sv">"tableService.sortData($event)"</span> <span class="pl">[</span><span class="at">magic</span><span class="pl">]</span><span class="dl">=</span><span class="sv">"mgc.TableEventList"</span> <span class="at">data-comp-id</span><span class="dl">=</span><span class="sv">"table.1"</span><span class="dl">&gt;</span></div><div class="a code" style="left:484.00px;top:751.68px"><span class="dl">&lt;</span><span class="tg">mat-header-row</span> <span class="dl">*</span><span class="at">matHeaderRowDef</span><span class="dl">=</span><span class="sv">"displayedColumns"</span><span class="dl">&gt;</span><span class="dl">&lt;/</span><span class="tg">mat-header-row</span><span class="dl">&gt;</span></div><div class="a code" style="left:484.00px;top:766.87px"><span class="dl">&lt;</span><span class="tg">mat-row</span> <span class="dl">*</span><span class="at">matRowDef</span><span class="dl">=</span><span class="sv">"let row; columns: displayedColumns;"</span> <span class="pl">[</span><span class="at">ngClass</span><span class="pl">]</span><span class="dl">=</span><span class="sv">"{ 'selected': selection.isSelected(row)}"</span> <span class="pl">[</span><span class="at">magicRow</span><span class="pl">]</span><span class="dl">=</span><span class="sv">"row?.rowId"</span> <span class="pl">(</span><span class="at">click</span><span class="pl">)</span><span class="dl">=</span><span class="sv">"row? tableService.selectRow(row.rowId) : null"</span><span class="dl">&gt;</span><span class="dl">&lt;/</span><span class="tg">mat-row</span><span class="dl">&gt;</span></div><div class="a code" style="left:484.00px;top:782.06px"><span class="dl">&lt;</span><span class="tg">ng-container</span> <span class="at">id</span><span class="dl">=</span><span class="sv">"table-column.1"</span> <span class="pl">[</span><span class="at">magic</span><span class="pl">]</span><span class="dl">=</span><span class="sv">"mgc.EventID"</span> <span class="pl">[</span><span class="at">matColumnDef</span><span class="pl">]</span><span class="dl">=</span><span class="sv">"mgc.EventID"</span> <span class="at">data-comp-id</span><span class="dl">=</span><span class="sv">"table-column.1"</span><span class="dl">&gt;</span></div><div class="a code" style="left:508.60px;top:797.25px"><span class="dl">&lt;</span><span class="tg">mat-header-cell</span> <span class="dl">*</span><span class="at">matHeaderCellDef</span> <span class="at">data-comp-id</span><span class="dl">=</span><span class="sv">"table-header-cell.1"</span> <span class="at">class</span><span class="dl">=</span><span class="sv">"table-col-xs text-center"</span><span class="dl">&gt;</span><span class="pl">#</span><span class="dl">&lt;/</span><span class="tg">mat-header-cell</span><span class="dl">&gt;</span></div><div class="a code" style="left:508.60px;top:812.44px"><span class="dl">&lt;</span><span class="tg">mat-cell</span> <span class="dl">*</span><span class="at">matCellDef</span><span class="dl">=</span><span class="sv">"let row"</span> <span class="at">magicMark</span><span class="dl">=</span><span class="sv">"magicTableRowContainer"</span> <span class="at">data-comp-id</span><span class="dl">=</span><span class="sv">"column-cell.1"</span> <span class="at">class</span><span class="dl">=</span><span class="sv">"table-col-xs text-center"</span><span class="dl">&gt;</span></div><div class="a code" style="left:533.20px;top:827.63px"><span class="dl">&lt;</span><span class="tg">c-container</span> <span class="pl">#</span><span class="at">matCell</span> <span class="pl">[</span><span class="at">formGroup</span><span class="pl">]</span><span class="dl">=</span><span class="sv">"mg.getFormGroupByRow(row.rowId)"</span> <span class="dl">*</span><span class="at">ngIf</span><span class="dl">=</span><span class="sv">"mg.ifRowCreated(row)"</span> <span class="at">data-comp-id</span><span class="dl">=</span><span class="sv">"c-container.3"</span><span class="dl">&gt;</span></div><div class="a code" style="left:557.80px;top:842.82px"><span class="dl">&lt;</span><span class="tg">label</span> <span class="at">data-comp-id</span><span class="dl">=</span><span class="sv">"label.1"</span> <span class="at">id</span><span class="dl">=</span><span class="sv">"label.1"</span> <span class="pl">[</span><span class="at">magic</span><span class="pl">]</span><span class="dl">=</span><span class="sv">"mgc.Event_Inforrmation_Event_ID"</span> <span class="pl">[</span><span class="at">rowId</span><span class="pl">]</span><span class="dl">=</span><span class="sv">"row.rowId"</span><span class="dl">&gt;</span><span class="pl">{{ mg.getValue(mgc.Event_Inforrmation_Event_ID,row.rowId) }}</span><span class="dl">&lt;/</span><span class="tg">label</span><span class="dl">&gt;</span></div><div class="a code" style="left:533.20px;top:858.01px"><span class="dl">&lt;/</span><span class="tg">c-container</span><span class="dl">&gt;</span></div><div class="a code" style="left:508.60px;top:873.20px"><span class="dl">&lt;/</span><span class="tg">mat-cell</span><span class="dl">&gt;</span></div><div class="a code" style="left:484.00px;top:888.39px"><span class="dl">&lt;/</span><span class="tg">ng-container</span><span class="dl">&gt;</span></div><div class="a code" style="left:484.00px;top:903.58px"><span class="dl">&lt;</span><span class="tg">ng-container</span> <span class="at">id</span><span class="dl">=</span><span class="sv">"table-column.2"</span> <span class="pl">[</span><span class="at">magic</span><span class="pl">]</span><span class="dl">=</span><span class="sv">"mgc.EventType"</span> <span class="pl">[</span><span class="at">matColumnDef</span><span class="pl">]</span><span class="dl">=</span><span class="sv">"mgc.EventType"</span> <span class="at">data-comp-id</span><span class="dl">=</span><span class="sv">"table-column.2"</span><span class="dl">&gt;</span></div></div></div>
<div class="a " style="left:634px;top:567.3px;width:478px;height:52.7px;border:9.4px solid #fdd03b"></div>
<div class="a " style="left:360px;top:905px;width:1159px;height:3.5px;background:rgba(150,150,150,.55)"></div>
<div class="a " style="left:1634px;top:40px;width:6px;height:870px;background:#dadada;border-left:2px solid #c2c2c2;border-right:2px solid #c2c2c2"></div>
<div class="a " style="left:1640px;top:40px;width:279px;height:870px;background:#f2f2f2"></div>
<div class="a " style="left:1919px;top:0px;width:1px;height:910px;background:#7f84c9"></div>
<div class="a " style="left:1643.5px;top:44px;width:77px;height:22px;background:#efefef;border:1px solid #c6c6c6;border-bottom:none"></div>
<svg class="a" style="left:1652px;top:48px" width="13" height="14" viewBox="0 0 13 14"><ellipse cx="6.5" cy="2.5" rx="6" ry="2.3" fill="#777"/><path d="M.5 4.5V6A6 2.3 0 0 0 12.5 6V4.5A6 2.3 0 0 1 .5 4.5ZM.5 8V9.5A6 2.3 0 0 0 12.5 9.5V8A6 2.3 0 0 1 .5 8ZM.5 11.3V12A6 2.3 0 0 0 12.5 12V11.3A6 2.3 0 0 1 .5 11.3Z" fill="#777"/></svg>
<div class="a t " style="left:1678px;top:52px;font-size:11px;color:#888">Models</div>
<div class="a " style="left:1711px;top:45px;width:9px;height:20px;background:#efefef"></div>
<div class="a " style="left:1724px;top:44px;width:78px;height:22px;background:#efefef;border:1px solid #c6c6c6;border-bottom:none"></div>
<svg class="a" style="left:1733px;top:50px" width="14" height="12" viewBox="0 0 14 12"><rect x="5.5" y="0" width="3" height="3" fill="#777"/><path d="M7 3V5M2 7V5H12V7M7 5V7" fill="none" stroke="#777" stroke-width="1"/><rect x="0" y="7.5" width="3.5" height="3.5" fill="#777"/><rect x="5.2" y="7.5" width="3.5" height="3.5" fill="#777"/><rect x="10.5" y="7.5" width="3.5" height="3.5" fill="#777"/></svg>
<div class="a t " style="left:1761px;top:52px;font-size:11px;color:#888">Outline</div>
<div class="a " style="left:1792px;top:45px;width:9px;height:20px;background:#efefef"></div>
<div class="a " style="left:1807px;top:44px;width:112px;height:22px;background:#6cb4e0"></div>
<svg class="a" style="left:1815px;top:49px" width="14" height="11" viewBox="0 0 14 11"><path d="M0 1H14M0 4H14M0 7H14M0 10H14" stroke="#fff" stroke-width="1.6"/></svg>
<div class="a t" style="left:1842px;top:52px;width:68.5px;overflow:hidden;font-size:11px;color:#fff">PropertySheet</div>
<div class="a " style="left:1640px;top:66px;width:279px;height:4px;background:#0096d6"></div>
<div class="a " style="left:1640px;top:70px;width:279px;height:26px;background:#d9d9d9"></div>
<div class="a t " style="left:1647.5px;top:77px;font-size:11.5px;color:#222">Card</div>
<svg class="a" style="left:1902px;top:77px" width="10" height="11" viewBox="0 0 10 11"><rect x="0" y="1" width="10" height="1.5" fill="#1a8fd8"/><rect x="3" y="0" width="4" height="1.5" fill="#1a8fd8"/><path d="M1 3H9L8.3 11H1.7Z" fill="#1a8fd8"/><path d="M3.5 4.5V9.5M5 4.5V9.5M6.5 4.5V9.5" stroke="#8cc7ee" stroke-width=".6"/></svg>
<div class="a " style="left:1640px;top:96px;width:279px;height:18px;background:#e6e6e6"></div>
<div class="a tri" style="left:1646px;top:102px"></div>
<div class="a t " style="left:1660px;top:100.5px;font-size:9.7px;font-weight:bold;color:#222">Events &amp; Data</div>
<div class="a t" style="left:1564px;top:122.0px;width:120px;text-align:right;font-size:9.5px;color:#222">Data</div>
<div class="a " style="left:1690.5px;top:120px;width:222.5px;height:17px;background:#fff;border:1px solid #bdbdbd"></div>
<div class="a t " style="left:1694.5px;top:123.5px;font-size:10px;color:#222">mgc.MainGroup</div>
<div class="a " style="left:1897.0px;top:120px;width:16px;height:17px;background:#f3f3f3;border:1px solid #bdbdbd"></div>
<svg class="a" style="left:1900.0px;top:123.5px" width="10" height="10" viewBox="0 0 24 24"><path fill="#111" d="M19.4 13a7.5 7.5 0 0 0 0-2l2.1-1.6-2-3.5-2.5 1a7.4 7.4 0 0 0-1.7-1L15 3h-4l-.4 2.9a7.4 7.4 0 0 0-1.7 1l-2.5-1-2 3.5L6.6 11a7.5 7.5 0 0 0 0 2l-2.1 1.6 2 3.5 2.5-1a7.4 7.4 0 0 0 1.7 1L11 21h4l.4-2.9a7.4 7.4 0 0 0 1.7-1l2.5 1 2-3.5ZM12 15.5A3.5 3.5 0 1 1 12 8.5 3.5 3.5 0 0 1 12 15.5Z"/></svg>
<div class="a t" style="left:1564px;top:141.0px;width:120px;text-align:right;font-size:9.5px;color:#222">Id</div>
<div class="a " style="left:1690.5px;top:139px;width:222.5px;height:17px;background:#fff;border:1px solid #bdbdbd"></div>
<div class="a t " style="left:1694.5px;top:142.5px;font-size:10px;color:#222">card.1</div>
<div class="a t" style="left:1564px;top:160.0px;width:120px;text-align:right;font-size:9.5px;color:#222">Is Visible</div>
<div class="a " style="left:1690.5px;top:158px;width:222.5px;height:17px;background:#fff;border:1px solid #bdbdbd"></div>
<div class="a " style="left:1897.0px;top:158px;width:16px;height:17px;background:#f3f3f3;border:1px solid #bdbdbd"></div>
<svg class="a" style="left:1900.0px;top:161.5px" width="10" height="10" viewBox="0 0 24 24"><path fill="#111" d="M19.4 13a7.5 7.5 0 0 0 0-2l2.1-1.6-2-3.5-2.5 1a7.4 7.4 0 0 0-1.7-1L15 3h-4l-.4 2.9a7.4 7.4 0 0 0-1.7 1l-2.5-1-2 3.5L6.6 11a7.5 7.5 0 0 0 0 2l-2.1 1.6 2 3.5 2.5-1a7.4 7.4 0 0 0 1.7 1L11 21h4l.4-2.9a7.4 7.4 0 0 0 1.7-1l2.5 1 2-3.5ZM12 15.5A3.5 3.5 0 1 1 12 8.5 3.5 3.5 0 0 1 12 15.5Z"/></svg>
<div class="a " style="left:1640px;top:184px;width:279px;height:18px;background:#e6e6e6"></div>
<div class="a tri" style="left:1646px;top:190px"></div>
<div class="a t " style="left:1660px;top:188.5px;font-size:9.7px;font-weight:bold;color:#222">Styling Overrides</div>
<div class="a t " style="left:1646px;top:211px;font-size:9.5px;color:#222">Class</div>
<div class="a " style="left:1676.5px;top:208px;width:236.5px;height:24px;background:#fff;border:1px solid #bdbdbd"></div>
<div class="a t " style="left:1680.5px;top:215.0px;font-size:10px;color:#999">Select class...</div>
<div class="a " style="left:1640px;top:237.5px;width:279px;height:18px;background:#e6e6e6"></div>
<div class="a tri" style="left:1646px;top:243.5px"></div>
<div class="a t " style="left:1660px;top:242.0px;font-size:9.7px;font-weight:bold;color:#222">Display Logic</div>
<div class="a t" style="left:1610.5px;top:264.0px;width:120px;text-align:right;font-size:9.5px;color:#222">Alignment</div>
<div class="a " style="left:1736px;top:262px;width:177px;height:17px;background:#fff;border:1px solid #bdbdbd"></div>
<div class="a t " style="left:1740px;top:265.5px;font-size:10px;color:#222">Default</div>
<div class="a" style="left:1903px;top:269.5px;width:0;height:0;border-left:3px solid transparent;border-right:3px solid transparent;border-top:3.5px solid #222"></div>
<div class="a t" style="left:1610.5px;top:283.0px;width:120px;text-align:right;font-size:9.5px;color:#222">Text Wrap</div>
<div class="a " style="left:1736px;top:281px;width:177px;height:17px;background:#fff;border:1px solid #bdbdbd"></div>
<div class="a" style="left:1903px;top:288.5px;width:0;height:0;border-left:3px solid transparent;border-right:3px solid transparent;border-top:3.5px solid #222"></div>
<div class="a t" style="left:1610.5px;top:302.0px;width:120px;text-align:right;font-size:9.5px;color:#222">Text Transformation</div>
<div class="a " style="left:1736px;top:300px;width:177px;height:17px;background:#fff;border:1px solid #bdbdbd"></div>
<div class="a t " style="left:1740px;top:303.5px;font-size:10px;color:#222">Default</div>
<div class="a" style="left:1903px;top:307.5px;width:0;height:0;border-left:3px solid transparent;border-right:3px solid transparent;border-top:3.5px solid #222"></div>
<div class="a t" style="left:1610.5px;top:321.0px;width:120px;text-align:right;font-size:9.5px;color:#222">Display If</div>
<div class="a " style="left:1736px;top:319px;width:177px;height:17px;background:#fff;border:1px solid #bdbdbd"></div>
<div class="a " style="left:1897px;top:319px;width:16px;height:17px;background:#f3f3f3;border:1px solid #bdbdbd"></div>
<svg class="a" style="left:1900px;top:322.5px" width="10" height="10" viewBox="0 0 24 24"><path fill="#111" d="M19.4 13a7.5 7.5 0 0 0 0-2l2.1-1.6-2-3.5-2.5 1a7.4 7.4 0 0 0-1.7-1L15 3h-4l-.4 2.9a7.4 7.4 0 0 0-1.7 1l-2.5-1-2 3.5L6.6 11a7.5 7.5 0 0 0 0 2l-2.1 1.6 2 3.5 2.5-1a7.4 7.4 0 0 0 1.7 1L11 21h4l.4-2.9a7.4 7.4 0 0 0 1.7-1l2.5 1 2-3.5ZM12 15.5A3.5 3.5 0 1 1 12 8.5 3.5 3.5 0 0 1 12 15.5Z"/></svg>
<div class="a " style="left:1640px;top:353px;width:279px;height:18px;background:#e6e6e6"></div>
<div class="a tri" style="left:1646px;top:359px"></div>
<div class="a t " style="left:1660px;top:357.5px;font-size:9.7px;font-weight:bold;color:#222">Dynamic Properties</div>
<svg class="a" style="left:1647px;top:379px" width="11" height="11" viewBox="0 0 11 11"><path d="M5.5 0V11M0 5.5H11" stroke="#111" stroke-width="2.4"/></svg>
<div class="a t " style="left:1664px;top:380px;font-size:10.5px;color:#222">Add New Property</div>
<div class="a " style="left:1593px;top:392px;width:340px;height:54px;border:10px solid #fdd03b;border-right:none"></div>
<div class="a t " style="left:1646px;top:410px;font-size:9.5px;color:#222">[style.display]</div>
<div class="a " style="left:1709px;top:407px;width:175px;height:17.5px;background:#fff;border:1px solid #bdbdbd"></div>
<div class="a" style="left:1713px;top:410.5px;width:168px;overflow:hidden;white-space:nowrap;font-size:10px;line-height:1;color:#222">mg.getVisible(mgc.MainGroup)=='visible'?'block':'none'</div>
<div class="a " style="left:1883px;top:407px;width:15.5px;height:17.5px;background:#eee;border:1px solid #bdbdbd"></div>
<div class="a " style="left:1898px;top:407px;width:15.5px;height:17.5px;background:#eee;border:1px solid #bdbdbd"></div>
<svg class="a" style="left:1886px;top:411px" width="10" height="9" viewBox="0 0 10 9"><path d="M.5 4.5Q5 -1 9.5 4.5Q5 10 .5 4.5Z" fill="none" stroke="#222" stroke-width="1"/><circle cx="5" cy="4.5" r="1.6" fill="#222"/><path d="M8.5 .5L2 8.5" stroke="#222" stroke-width="1"/></svg>
<svg class="a" style="left:1901px;top:410px" width="9" height="11" viewBox="0 0 10 11"><rect x="0" y="1" width="10" height="1.5" fill="#222"/><rect x="3" y="0" width="4" height="1.5" fill="#222"/><path d="M1 3H9L8.3 11H1.7Z" fill="#222"/></svg>
</body></html>
